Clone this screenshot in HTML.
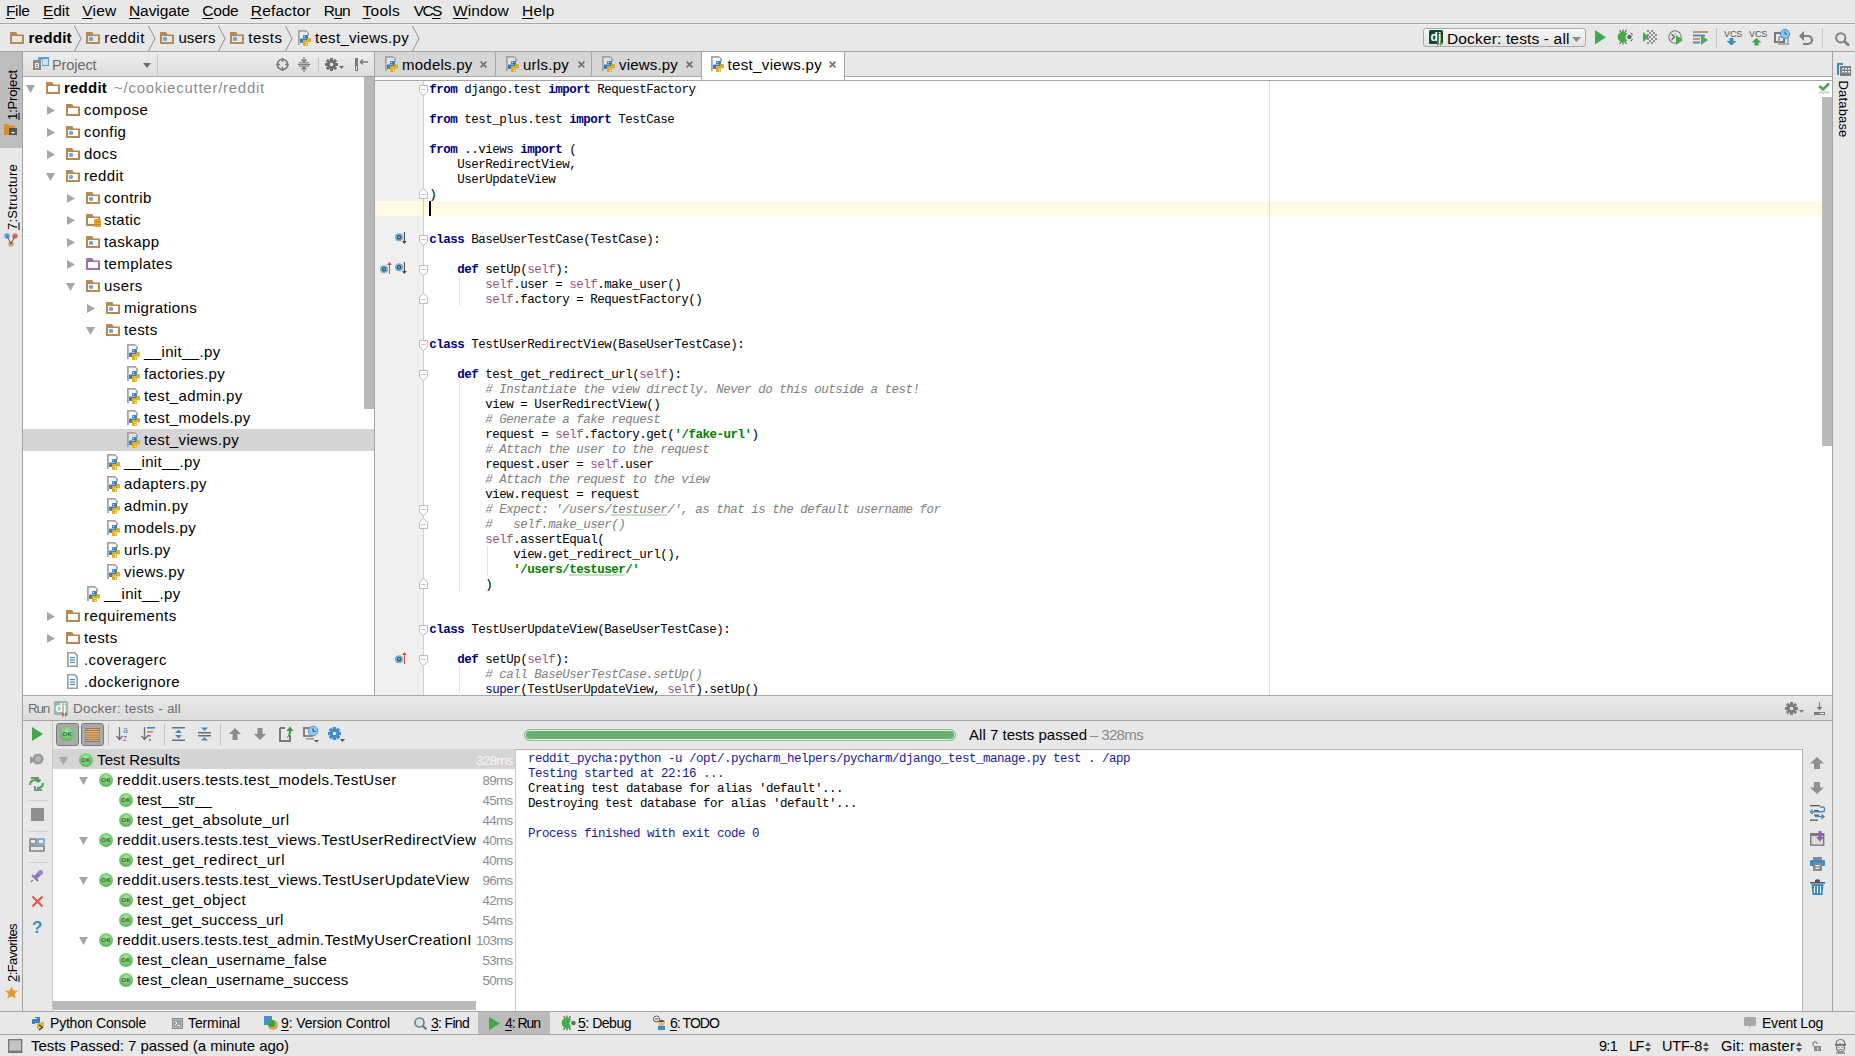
<!DOCTYPE html><html><head><meta charset="utf-8"><style>
*{margin:0;padding:0;box-sizing:border-box}
html,body{width:1855px;height:1056px;overflow:hidden}
body{position:relative;background:#E8E8E8;font-family:"Liberation Sans",sans-serif;color:#000;font-size:15px}
.a{position:absolute}
.t{position:absolute;white-space:pre;line-height:1}
.mono{font-family:"Liberation Mono",monospace}
.u{text-decoration:underline;text-decoration-thickness:1px;text-underline-offset:2px}
.hl{position:absolute;height:1px}
.vl{position:absolute;width:1px}
svg{position:absolute;overflow:visible}
</style></head><body>
<div class="a" style="left:0px;top:22px;width:1855px;height:1px;background:#EDEDED;"></div>
<div class="a" style="left:0px;top:23px;width:1855px;height:1px;background:#A4A4A4;"></div>
<div class="a" style="left:0px;top:24px;width:1855px;height:1px;background:#F2F2F2;"></div>
<div class="a" style="left:0px;top:51px;width:1855px;height:1px;background:#A6A6A6;"></div>
<div class="a" style="left:0px;top:52px;width:22px;height:96px;background:#BDBDBD;"></div>
<div class="a" style="left:22px;top:52px;width:1px;height:959px;background:#A2A2A2;"></div>
<div class="a" style="left:1832px;top:52px;width:1px;height:959px;background:#A2A2A2;"></div>
<div class="a" style="left:23px;top:52px;width:351px;height:24px;background:linear-gradient(#EDEDED,#DEDEDE);"></div>
<div class="a" style="left:23px;top:76px;width:351px;height:1px;background:#A6A6A6;"></div>
<div class="a" style="left:157px;top:54px;width:1px;height:20px;background:#C9C9C9;"></div>
<div class="a" style="left:23px;top:77px;width:351px;height:618px;background:#FFFFFF;"></div>
<div class="a" style="left:23px;top:429px;width:351px;height:22px;background:#D5D5D5;"></div>
<div class="a" style="left:364px;top:77px;width:10px;height:332px;background:#B9B9B9;"></div>
<div class="a" style="left:374px;top:52px;width:1px;height:643px;background:#A6A6A6;"></div>
<div class="a" style="left:375px;top:52px;width:1457px;height:24px;background:#E8E8E8;"></div>
<div class="a" style="left:375px;top:76px;width:1457px;height:1px;background:#A6A6A6;"></div>
<div class="a" style="left:375px;top:77px;width:1457px;height:618px;background:#FFFFFF;"></div>
<div class="a" style="left:375px;top:80px;width:1457px;height:1px;background:#A6A6A6;"></div>
<div class="a" style="left:375px;top:81px;width:48px;height:614px;background:#F0F0F0;"></div>
<div class="a" style="left:423px;top:81px;width:1px;height:614px;background:#D0D0D0;"></div>
<div class="a" style="left:375px;top:201px;width:1447px;height:15px;background:#FFFAE3;"></div>
<div class="a" style="left:1269px;top:81px;width:1px;height:614px;background:#E0E0E0;"></div>
<div class="a" style="left:1822px;top:97px;width:10px;height:349px;background:#B9B9B9;"></div>
<div class="a" style="left:23px;top:696px;width:1809px;height:24px;background:linear-gradient(#E9E9E9,#DCDCDC);"></div>
<div class="a" style="left:23px;top:695px;width:1809px;height:1px;background:#A8A8A8;"></div>
<div class="a" style="left:23px;top:720px;width:1809px;height:1px;background:#A6A6A6;"></div>
<div class="a" style="left:52px;top:721px;width:1px;height:290px;background:#C9C9C9;"></div>
<div class="a" style="left:53px;top:749px;width:463px;height:262px;background:#FFFFFF;"></div>
<div class="a" style="left:53px;top:749px;width:462px;height:20px;background:#D5D5D5;"></div>
<div class="a" style="left:515px;top:749px;width:1px;height:262px;background:#C9C9C9;"></div>
<div class="a" style="left:53px;top:1001px;width:423px;height:9px;background:#B9B9B9;"></div>
<div class="a" style="left:516px;top:749px;width:1286px;height:262px;background:#FFFFFF;"></div>
<div class="a" style="left:516px;top:749px;width:1287px;height:1px;background:#B4B4B4;"></div>
<div class="a" style="left:1802px;top:749px;width:1px;height:262px;background:#B4B4B4;"></div>
<div class="a" style="left:0px;top:1011px;width:1855px;height:1px;background:#A6A6A6;"></div>
<div class="a" style="left:478px;top:1012px;width:72px;height:22px;background:#BBBBBB;"></div>
<div class="a" style="left:0px;top:1034px;width:1855px;height:1px;background:#A6A6A6;"></div>
<div class="t" style="left:6px;top:3px;font-size:15.5px;color:#000;letter-spacing:-0.394px;"><span class="u">F</span>ile</div>
<div class="t" style="left:43px;top:3px;font-size:15.5px;color:#000;letter-spacing:-0.077px;"><span class="u">E</span>dit</div>
<div class="t" style="left:82.3px;top:3px;font-size:15.5px;color:#000;letter-spacing:0.171px;"><span class="u">V</span>iew</div>
<div class="t" style="left:129px;top:3px;font-size:15.5px;color:#000;letter-spacing:-0.097px;"><span class="u">N</span>avigate</div>
<div class="t" style="left:202.3px;top:3px;font-size:15.5px;color:#000;letter-spacing:-0.214px;"><span class="u">C</span>ode</div>
<div class="t" style="left:250.8px;top:3px;font-size:15.5px;color:#000;letter-spacing:0.178px;"><span class="u">R</span>efactor</div>
<div class="t" style="left:323.8px;top:3px;font-size:15.5px;color:#000;letter-spacing:-0.878px;">R<span class="u">u</span>n</div>
<div class="t" style="left:362.5px;top:3px;font-size:15.5px;color:#000;letter-spacing:0.263px;"><span class="u">T</span>ools</div>
<div class="t" style="left:413.8px;top:3px;font-size:15.5px;color:#000;letter-spacing:-1.691px;">VC<span class="u">S</span></div>
<div class="t" style="left:452.9px;top:3px;font-size:15.5px;color:#000;letter-spacing:0.145px;"><span class="u">W</span>indow</div>
<div class="t" style="left:522.1px;top:3px;font-size:15.5px;color:#000;letter-spacing:0.105px;"><span class="u">H</span>elp</div>
<svg style="left:26px;top:85px" width="9" height="8" viewBox="0 0 9 8"><path fill="#A6A6A6" d="M0 0H9L4.5 8Z"/></svg>
<svg style="left:46px;top:82px" width="17" height="14" viewBox="0 0 17 14"><path fill="#B68A53" fill-rule="evenodd" d="M0 0H6.2L7.6 2.6H14V12H0Z M2 4V10H12V4Z"/></svg>
<div class="t" style="left:64px;top:80px;font-size:15.0px;color:#000;letter-spacing:0.222px;"><b>reddit</b></div>
<div class="t" style="left:114px;top:80px;font-size:15.0px;color:#8C8C8C;letter-spacing:0.739px;">~/cookiecutter/reddit</div>
<svg style="left:47px;top:106px" width="8" height="9" viewBox="0 0 8 9"><path fill="#A6A6A6" d="M0 0L8 4.5L0 9Z"/></svg>
<svg style="left:66px;top:104px" width="17" height="14" viewBox="0 0 17 14"><path fill="#B68A53" fill-rule="evenodd" d="M0 0H6.2L7.6 2.6H14V12H0Z M2 4V10H12V4Z"/></svg>
<div class="t" style="left:84px;top:102px;font-size:15.0px;color:#000;letter-spacing:0.497px;">compose</div>
<svg style="left:47px;top:128px" width="8" height="9" viewBox="0 0 8 9"><path fill="#A6A6A6" d="M0 0L8 4.5L0 9Z"/></svg>
<svg style="left:66px;top:126px" width="17" height="14" viewBox="0 0 17 14"><path fill="#B68A53" fill-rule="evenodd" d="M0 0H6.2L7.6 2.6H14V12H0Z M2 4V10H12V4Z"/><circle cx="5" cy="6.9" r="2.2" fill="#72A6CF"/></svg>
<div class="t" style="left:84px;top:124px;font-size:15.0px;color:#000;letter-spacing:0.381px;">config</div>
<svg style="left:47px;top:150px" width="8" height="9" viewBox="0 0 8 9"><path fill="#A6A6A6" d="M0 0L8 4.5L0 9Z"/></svg>
<svg style="left:66px;top:148px" width="17" height="14" viewBox="0 0 17 14"><path fill="#B68A53" fill-rule="evenodd" d="M0 0H6.2L7.6 2.6H14V12H0Z M2 4V10H12V4Z"/><circle cx="5" cy="6.9" r="2.2" fill="#72A6CF"/></svg>
<div class="t" style="left:84px;top:146px;font-size:15.0px;color:#000;letter-spacing:0.452px;">docs</div>
<svg style="left:46px;top:173px" width="9" height="8" viewBox="0 0 9 8"><path fill="#A6A6A6" d="M0 0H9L4.5 8Z"/></svg>
<svg style="left:66px;top:170px" width="17" height="14" viewBox="0 0 17 14"><path fill="#B68A53" fill-rule="evenodd" d="M0 0H6.2L7.6 2.6H14V12H0Z M2 4V10H12V4Z"/><circle cx="5" cy="6.9" r="2.2" fill="#72A6CF"/></svg>
<div class="t" style="left:84px;top:168px;font-size:15.0px;color:#000;letter-spacing:0.357px;">reddit</div>
<svg style="left:67px;top:194px" width="8" height="9" viewBox="0 0 8 9"><path fill="#A6A6A6" d="M0 0L8 4.5L0 9Z"/></svg>
<svg style="left:86px;top:192px" width="17" height="14" viewBox="0 0 17 14"><path fill="#B68A53" fill-rule="evenodd" d="M0 0H6.2L7.6 2.6H14V12H0Z M2 4V10H12V4Z"/><circle cx="5" cy="6.9" r="2.2" fill="#72A6CF"/></svg>
<div class="t" style="left:104px;top:190px;font-size:15.0px;color:#000;letter-spacing:0.367px;">contrib</div>
<svg style="left:67px;top:216px" width="8" height="9" viewBox="0 0 8 9"><path fill="#A6A6A6" d="M0 0L8 4.5L0 9Z"/></svg>
<svg style="left:86px;top:214px" width="17" height="14" viewBox="0 0 17 14"><path fill="#B68A53" fill-rule="evenodd" d="M0 0H6.2L7.6 2.6H14V12H0Z M2 4V10H12V4Z"/><rect x="8" y="5" width="7" height="8" fill="#F2B21C"/><rect x="8" y="7.3" width="7" height="1" fill="#8A8A8A"/><rect x="8" y="10.2" width="7" height="1" fill="#8A8A8A"/><rect x="10" y="5" width="1" height="8" fill="#D08000" opacity=".6"/><rect x="12.5" y="5" width="1" height="8" fill="#D08000" opacity=".6"/></svg>
<div class="t" style="left:104px;top:212px;font-size:15.0px;color:#000;letter-spacing:0.333px;">static</div>
<svg style="left:67px;top:238px" width="8" height="9" viewBox="0 0 8 9"><path fill="#A6A6A6" d="M0 0L8 4.5L0 9Z"/></svg>
<svg style="left:86px;top:236px" width="17" height="14" viewBox="0 0 17 14"><path fill="#B68A53" fill-rule="evenodd" d="M0 0H6.2L7.6 2.6H14V12H0Z M2 4V10H12V4Z"/><circle cx="5" cy="6.9" r="2.2" fill="#72A6CF"/></svg>
<div class="t" style="left:104px;top:234px;font-size:15.0px;color:#000;letter-spacing:0.429px;">taskapp</div>
<svg style="left:67px;top:260px" width="8" height="9" viewBox="0 0 8 9"><path fill="#A6A6A6" d="M0 0L8 4.5L0 9Z"/></svg>
<svg style="left:86px;top:258px" width="17" height="14" viewBox="0 0 17 14"><path fill="#9C71B0" fill-rule="evenodd" d="M0 0H6.2L7.6 2.6H14V12H0Z M2 4V10H12V4Z"/></svg>
<div class="t" style="left:104px;top:256px;font-size:15.0px;color:#000;letter-spacing:0.413px;">templates</div>
<svg style="left:66px;top:283px" width="9" height="8" viewBox="0 0 9 8"><path fill="#A6A6A6" d="M0 0H9L4.5 8Z"/></svg>
<svg style="left:86px;top:280px" width="17" height="14" viewBox="0 0 17 14"><path fill="#B68A53" fill-rule="evenodd" d="M0 0H6.2L7.6 2.6H14V12H0Z M2 4V10H12V4Z"/><circle cx="5" cy="6.9" r="2.2" fill="#72A6CF"/></svg>
<div class="t" style="left:104px;top:278px;font-size:15.0px;color:#000;letter-spacing:0.419px;">users</div>
<svg style="left:87px;top:304px" width="8" height="9" viewBox="0 0 8 9"><path fill="#A6A6A6" d="M0 0L8 4.5L0 9Z"/></svg>
<svg style="left:106px;top:302px" width="17" height="14" viewBox="0 0 17 14"><path fill="#B68A53" fill-rule="evenodd" d="M0 0H6.2L7.6 2.6H14V12H0Z M2 4V10H12V4Z"/><circle cx="5" cy="6.9" r="2.2" fill="#72A6CF"/></svg>
<div class="t" style="left:124px;top:300px;font-size:15.0px;color:#000;letter-spacing:0.395px;">migrations</div>
<svg style="left:86px;top:327px" width="9" height="8" viewBox="0 0 9 8"><path fill="#A6A6A6" d="M0 0H9L4.5 8Z"/></svg>
<svg style="left:106px;top:324px" width="17" height="14" viewBox="0 0 17 14"><path fill="#B68A53" fill-rule="evenodd" d="M0 0H6.2L7.6 2.6H14V12H0Z M2 4V10H12V4Z"/><circle cx="5" cy="6.9" r="2.2" fill="#72A6CF"/></svg>
<div class="t" style="left:124px;top:322px;font-size:15.0px;color:#000;letter-spacing:0.362px;">tests</div>
<svg style="left:125px;top:344px" width="16" height="17" viewBox="0 0 16 17"><path fill="#A3A3A3" d="M2 0H10L13 3V5.5H11.2V3.8L9.3 1.8H3.8V15H2Z"/><path fill="#F4F4F4" opacity=".45" d="M3.8 1.8H9.3V3.8H11.2V5H7.5V8.5H4.8Q4 8.5 3.8 9Z"/><circle cx="10.4" cy="2.6" r=".7" fill="#fff"/><path fill="#3D7DB8" d="M7 5.8Q7 5 7.8 5H11.2Q12 5 12 5.8V10.2Q12 11 11.2 11H7.6V12.2Q7.6 13 6.8 13H4.8Q4 13 4 12.2V9.3Q4 8.5 4.8 8.5H10V8H7Z"/><circle cx="8.4" cy="6.3" r=".65" fill="#fff"/><g transform="rotate(180 9.5 10.5)"><path fill="#E0B020" d="M7 5.8Q7 5 7.8 5H11.2Q12 5 12 5.8V10.2Q12 11 11.2 11H7.6V12.2Q7.6 13 6.8 13H4.8Q4 13 4 12.2V9.3Q4 8.5 4.8 8.5H10V8H7Z"/><circle cx="8.4" cy="6.3" r=".65" fill="#fff"/></g></svg>
<div class="t" style="left:144px;top:344px;font-size:15.0px;color:#000;letter-spacing:0.377px;">__init__.py</div>
<svg style="left:125px;top:366px" width="16" height="17" viewBox="0 0 16 17"><path fill="#A3A3A3" d="M2 0H10L13 3V5.5H11.2V3.8L9.3 1.8H3.8V15H2Z"/><path fill="#F4F4F4" opacity=".45" d="M3.8 1.8H9.3V3.8H11.2V5H7.5V8.5H4.8Q4 8.5 3.8 9Z"/><circle cx="10.4" cy="2.6" r=".7" fill="#fff"/><path fill="#3D7DB8" d="M7 5.8Q7 5 7.8 5H11.2Q12 5 12 5.8V10.2Q12 11 11.2 11H7.6V12.2Q7.6 13 6.8 13H4.8Q4 13 4 12.2V9.3Q4 8.5 4.8 8.5H10V8H7Z"/><circle cx="8.4" cy="6.3" r=".65" fill="#fff"/><g transform="rotate(180 9.5 10.5)"><path fill="#E0B020" d="M7 5.8Q7 5 7.8 5H11.2Q12 5 12 5.8V10.2Q12 11 11.2 11H7.6V12.2Q7.6 13 6.8 13H4.8Q4 13 4 12.2V9.3Q4 8.5 4.8 8.5H10V8H7Z"/><circle cx="8.4" cy="6.3" r=".65" fill="#fff"/></g></svg>
<div class="t" style="left:144px;top:366px;font-size:15.0px;color:#000;letter-spacing:0.365px;">factories.py</div>
<svg style="left:125px;top:388px" width="16" height="17" viewBox="0 0 16 17"><path fill="#A3A3A3" d="M2 0H10L13 3V5.5H11.2V3.8L9.3 1.8H3.8V15H2Z"/><path fill="#F4F4F4" opacity=".45" d="M3.8 1.8H9.3V3.8H11.2V5H7.5V8.5H4.8Q4 8.5 3.8 9Z"/><circle cx="10.4" cy="2.6" r=".7" fill="#fff"/><path fill="#3D7DB8" d="M7 5.8Q7 5 7.8 5H11.2Q12 5 12 5.8V10.2Q12 11 11.2 11H7.6V12.2Q7.6 13 6.8 13H4.8Q4 13 4 12.2V9.3Q4 8.5 4.8 8.5H10V8H7Z"/><circle cx="8.4" cy="6.3" r=".65" fill="#fff"/><g transform="rotate(180 9.5 10.5)"><path fill="#E0B020" d="M7 5.8Q7 5 7.8 5H11.2Q12 5 12 5.8V10.2Q12 11 11.2 11H7.6V12.2Q7.6 13 6.8 13H4.8Q4 13 4 12.2V9.3Q4 8.5 4.8 8.5H10V8H7Z"/><circle cx="8.4" cy="6.3" r=".65" fill="#fff"/></g></svg>
<div class="t" style="left:144px;top:388px;font-size:15.0px;color:#000;letter-spacing:0.410px;">test_admin.py</div>
<svg style="left:125px;top:410px" width="16" height="17" viewBox="0 0 16 17"><path fill="#A3A3A3" d="M2 0H10L13 3V5.5H11.2V3.8L9.3 1.8H3.8V15H2Z"/><path fill="#F4F4F4" opacity=".45" d="M3.8 1.8H9.3V3.8H11.2V5H7.5V8.5H4.8Q4 8.5 3.8 9Z"/><circle cx="10.4" cy="2.6" r=".7" fill="#fff"/><path fill="#3D7DB8" d="M7 5.8Q7 5 7.8 5H11.2Q12 5 12 5.8V10.2Q12 11 11.2 11H7.6V12.2Q7.6 13 6.8 13H4.8Q4 13 4 12.2V9.3Q4 8.5 4.8 8.5H10V8H7Z"/><circle cx="8.4" cy="6.3" r=".65" fill="#fff"/><g transform="rotate(180 9.5 10.5)"><path fill="#E0B020" d="M7 5.8Q7 5 7.8 5H11.2Q12 5 12 5.8V10.2Q12 11 11.2 11H7.6V12.2Q7.6 13 6.8 13H4.8Q4 13 4 12.2V9.3Q4 8.5 4.8 8.5H10V8H7Z"/><circle cx="8.4" cy="6.3" r=".65" fill="#fff"/></g></svg>
<div class="t" style="left:144px;top:410px;font-size:15.0px;color:#000;letter-spacing:0.412px;">test_models.py</div>
<svg style="left:125px;top:432px" width="16" height="17" viewBox="0 0 16 17"><path fill="#A3A3A3" d="M2 0H10L13 3V5.5H11.2V3.8L9.3 1.8H3.8V15H2Z"/><path fill="#F4F4F4" opacity=".45" d="M3.8 1.8H9.3V3.8H11.2V5H7.5V8.5H4.8Q4 8.5 3.8 9Z"/><circle cx="10.4" cy="2.6" r=".7" fill="#fff"/><path fill="#3D7DB8" d="M7 5.8Q7 5 7.8 5H11.2Q12 5 12 5.8V10.2Q12 11 11.2 11H7.6V12.2Q7.6 13 6.8 13H4.8Q4 13 4 12.2V9.3Q4 8.5 4.8 8.5H10V8H7Z"/><circle cx="8.4" cy="6.3" r=".65" fill="#fff"/><g transform="rotate(180 9.5 10.5)"><path fill="#E0B020" d="M7 5.8Q7 5 7.8 5H11.2Q12 5 12 5.8V10.2Q12 11 11.2 11H7.6V12.2Q7.6 13 6.8 13H4.8Q4 13 4 12.2V9.3Q4 8.5 4.8 8.5H10V8H7Z"/><circle cx="8.4" cy="6.3" r=".65" fill="#fff"/></g></svg>
<div class="t" style="left:144px;top:432px;font-size:15.0px;color:#000;letter-spacing:0.396px;">test_views.py</div>
<svg style="left:105px;top:454px" width="16" height="17" viewBox="0 0 16 17"><path fill="#A3A3A3" d="M2 0H10L13 3V5.5H11.2V3.8L9.3 1.8H3.8V15H2Z"/><path fill="#F4F4F4" opacity=".45" d="M3.8 1.8H9.3V3.8H11.2V5H7.5V8.5H4.8Q4 8.5 3.8 9Z"/><circle cx="10.4" cy="2.6" r=".7" fill="#fff"/><path fill="#3D7DB8" d="M7 5.8Q7 5 7.8 5H11.2Q12 5 12 5.8V10.2Q12 11 11.2 11H7.6V12.2Q7.6 13 6.8 13H4.8Q4 13 4 12.2V9.3Q4 8.5 4.8 8.5H10V8H7Z"/><circle cx="8.4" cy="6.3" r=".65" fill="#fff"/><g transform="rotate(180 9.5 10.5)"><path fill="#E0B020" d="M7 5.8Q7 5 7.8 5H11.2Q12 5 12 5.8V10.2Q12 11 11.2 11H7.6V12.2Q7.6 13 6.8 13H4.8Q4 13 4 12.2V9.3Q4 8.5 4.8 8.5H10V8H7Z"/><circle cx="8.4" cy="6.3" r=".65" fill="#fff"/></g></svg>
<div class="t" style="left:124px;top:454px;font-size:15.0px;color:#000;letter-spacing:0.377px;">__init__.py</div>
<svg style="left:105px;top:476px" width="16" height="17" viewBox="0 0 16 17"><path fill="#A3A3A3" d="M2 0H10L13 3V5.5H11.2V3.8L9.3 1.8H3.8V15H2Z"/><path fill="#F4F4F4" opacity=".45" d="M3.8 1.8H9.3V3.8H11.2V5H7.5V8.5H4.8Q4 8.5 3.8 9Z"/><circle cx="10.4" cy="2.6" r=".7" fill="#fff"/><path fill="#3D7DB8" d="M7 5.8Q7 5 7.8 5H11.2Q12 5 12 5.8V10.2Q12 11 11.2 11H7.6V12.2Q7.6 13 6.8 13H4.8Q4 13 4 12.2V9.3Q4 8.5 4.8 8.5H10V8H7Z"/><circle cx="8.4" cy="6.3" r=".65" fill="#fff"/><g transform="rotate(180 9.5 10.5)"><path fill="#E0B020" d="M7 5.8Q7 5 7.8 5H11.2Q12 5 12 5.8V10.2Q12 11 11.2 11H7.6V12.2Q7.6 13 6.8 13H4.8Q4 13 4 12.2V9.3Q4 8.5 4.8 8.5H10V8H7Z"/><circle cx="8.4" cy="6.3" r=".65" fill="#fff"/></g></svg>
<div class="t" style="left:124px;top:476px;font-size:15.0px;color:#000;letter-spacing:0.407px;">adapters.py</div>
<svg style="left:105px;top:498px" width="16" height="17" viewBox="0 0 16 17"><path fill="#A3A3A3" d="M2 0H10L13 3V5.5H11.2V3.8L9.3 1.8H3.8V15H2Z"/><path fill="#F4F4F4" opacity=".45" d="M3.8 1.8H9.3V3.8H11.2V5H7.5V8.5H4.8Q4 8.5 3.8 9Z"/><circle cx="10.4" cy="2.6" r=".7" fill="#fff"/><path fill="#3D7DB8" d="M7 5.8Q7 5 7.8 5H11.2Q12 5 12 5.8V10.2Q12 11 11.2 11H7.6V12.2Q7.6 13 6.8 13H4.8Q4 13 4 12.2V9.3Q4 8.5 4.8 8.5H10V8H7Z"/><circle cx="8.4" cy="6.3" r=".65" fill="#fff"/><g transform="rotate(180 9.5 10.5)"><path fill="#E0B020" d="M7 5.8Q7 5 7.8 5H11.2Q12 5 12 5.8V10.2Q12 11 11.2 11H7.6V12.2Q7.6 13 6.8 13H4.8Q4 13 4 12.2V9.3Q4 8.5 4.8 8.5H10V8H7Z"/><circle cx="8.4" cy="6.3" r=".65" fill="#fff"/></g></svg>
<div class="t" style="left:124px;top:498px;font-size:15.0px;color:#000;letter-spacing:0.435px;">admin.py</div>
<svg style="left:105px;top:520px" width="16" height="17" viewBox="0 0 16 17"><path fill="#A3A3A3" d="M2 0H10L13 3V5.5H11.2V3.8L9.3 1.8H3.8V15H2Z"/><path fill="#F4F4F4" opacity=".45" d="M3.8 1.8H9.3V3.8H11.2V5H7.5V8.5H4.8Q4 8.5 3.8 9Z"/><circle cx="10.4" cy="2.6" r=".7" fill="#fff"/><path fill="#3D7DB8" d="M7 5.8Q7 5 7.8 5H11.2Q12 5 12 5.8V10.2Q12 11 11.2 11H7.6V12.2Q7.6 13 6.8 13H4.8Q4 13 4 12.2V9.3Q4 8.5 4.8 8.5H10V8H7Z"/><circle cx="8.4" cy="6.3" r=".65" fill="#fff"/><g transform="rotate(180 9.5 10.5)"><path fill="#E0B020" d="M7 5.8Q7 5 7.8 5H11.2Q12 5 12 5.8V10.2Q12 11 11.2 11H7.6V12.2Q7.6 13 6.8 13H4.8Q4 13 4 12.2V9.3Q4 8.5 4.8 8.5H10V8H7Z"/><circle cx="8.4" cy="6.3" r=".65" fill="#fff"/></g></svg>
<div class="t" style="left:124px;top:520px;font-size:15.0px;color:#000;letter-spacing:0.434px;">models.py</div>
<svg style="left:105px;top:542px" width="16" height="17" viewBox="0 0 16 17"><path fill="#A3A3A3" d="M2 0H10L13 3V5.5H11.2V3.8L9.3 1.8H3.8V15H2Z"/><path fill="#F4F4F4" opacity=".45" d="M3.8 1.8H9.3V3.8H11.2V5H7.5V8.5H4.8Q4 8.5 3.8 9Z"/><circle cx="10.4" cy="2.6" r=".7" fill="#fff"/><path fill="#3D7DB8" d="M7 5.8Q7 5 7.8 5H11.2Q12 5 12 5.8V10.2Q12 11 11.2 11H7.6V12.2Q7.6 13 6.8 13H4.8Q4 13 4 12.2V9.3Q4 8.5 4.8 8.5H10V8H7Z"/><circle cx="8.4" cy="6.3" r=".65" fill="#fff"/><g transform="rotate(180 9.5 10.5)"><path fill="#E0B020" d="M7 5.8Q7 5 7.8 5H11.2Q12 5 12 5.8V10.2Q12 11 11.2 11H7.6V12.2Q7.6 13 6.8 13H4.8Q4 13 4 12.2V9.3Q4 8.5 4.8 8.5H10V8H7Z"/><circle cx="8.4" cy="6.3" r=".65" fill="#fff"/></g></svg>
<div class="t" style="left:124px;top:542px;font-size:15.0px;color:#000;letter-spacing:0.360px;">urls.py</div>
<svg style="left:105px;top:564px" width="16" height="17" viewBox="0 0 16 17"><path fill="#A3A3A3" d="M2 0H10L13 3V5.5H11.2V3.8L9.3 1.8H3.8V15H2Z"/><path fill="#F4F4F4" opacity=".45" d="M3.8 1.8H9.3V3.8H11.2V5H7.5V8.5H4.8Q4 8.5 3.8 9Z"/><circle cx="10.4" cy="2.6" r=".7" fill="#fff"/><path fill="#3D7DB8" d="M7 5.8Q7 5 7.8 5H11.2Q12 5 12 5.8V10.2Q12 11 11.2 11H7.6V12.2Q7.6 13 6.8 13H4.8Q4 13 4 12.2V9.3Q4 8.5 4.8 8.5H10V8H7Z"/><circle cx="8.4" cy="6.3" r=".65" fill="#fff"/><g transform="rotate(180 9.5 10.5)"><path fill="#E0B020" d="M7 5.8Q7 5 7.8 5H11.2Q12 5 12 5.8V10.2Q12 11 11.2 11H7.6V12.2Q7.6 13 6.8 13H4.8Q4 13 4 12.2V9.3Q4 8.5 4.8 8.5H10V8H7Z"/><circle cx="8.4" cy="6.3" r=".65" fill="#fff"/></g></svg>
<div class="t" style="left:124px;top:564px;font-size:15.0px;color:#000;letter-spacing:0.411px;">views.py</div>
<svg style="left:85px;top:586px" width="16" height="17" viewBox="0 0 16 17"><path fill="#A3A3A3" d="M2 0H10L13 3V5.5H11.2V3.8L9.3 1.8H3.8V15H2Z"/><path fill="#F4F4F4" opacity=".45" d="M3.8 1.8H9.3V3.8H11.2V5H7.5V8.5H4.8Q4 8.5 3.8 9Z"/><circle cx="10.4" cy="2.6" r=".7" fill="#fff"/><path fill="#3D7DB8" d="M7 5.8Q7 5 7.8 5H11.2Q12 5 12 5.8V10.2Q12 11 11.2 11H7.6V12.2Q7.6 13 6.8 13H4.8Q4 13 4 12.2V9.3Q4 8.5 4.8 8.5H10V8H7Z"/><circle cx="8.4" cy="6.3" r=".65" fill="#fff"/><g transform="rotate(180 9.5 10.5)"><path fill="#E0B020" d="M7 5.8Q7 5 7.8 5H11.2Q12 5 12 5.8V10.2Q12 11 11.2 11H7.6V12.2Q7.6 13 6.8 13H4.8Q4 13 4 12.2V9.3Q4 8.5 4.8 8.5H10V8H7Z"/><circle cx="8.4" cy="6.3" r=".65" fill="#fff"/></g></svg>
<div class="t" style="left:104px;top:586px;font-size:15.0px;color:#000;letter-spacing:0.377px;">__init__.py</div>
<svg style="left:47px;top:612px" width="8" height="9" viewBox="0 0 8 9"><path fill="#A6A6A6" d="M0 0L8 4.5L0 9Z"/></svg>
<svg style="left:66px;top:610px" width="17" height="14" viewBox="0 0 17 14"><path fill="#B68A53" fill-rule="evenodd" d="M0 0H6.2L7.6 2.6H14V12H0Z M2 4V10H12V4Z"/></svg>
<div class="t" style="left:84px;top:608px;font-size:15.0px;color:#000;letter-spacing:0.417px;">requirements</div>
<svg style="left:47px;top:634px" width="8" height="9" viewBox="0 0 8 9"><path fill="#A6A6A6" d="M0 0L8 4.5L0 9Z"/></svg>
<svg style="left:66px;top:632px" width="17" height="14" viewBox="0 0 17 14"><path fill="#B68A53" fill-rule="evenodd" d="M0 0H6.2L7.6 2.6H14V12H0Z M2 4V10H12V4Z"/></svg>
<div class="t" style="left:84px;top:630px;font-size:15.0px;color:#000;letter-spacing:0.362px;">tests</div>
<svg style="left:67px;top:652px" width="11" height="15" viewBox="0 0 11 15"><path fill="#9D9D9D" fill-rule="evenodd" d="M0 0H8L11 3V15H0Z M1.6 1.6V13.4H9.4V3.7L7.3 1.6Z"/><rect x="1.5" y="1.5" width="8" height="12" fill="#fff" opacity="0"/><rect x="3" y="5" width="5" height="1.2" fill="#3D8FC6"/><rect x="3" y="7.4" width="5" height="1.2" fill="#3D8FC6"/><rect x="3" y="9.8" width="5" height="1.2" fill="#3D8FC6"/></svg>
<div class="t" style="left:84px;top:652px;font-size:15.0px;color:#000;letter-spacing:0.407px;">.coveragerc</div>
<svg style="left:67px;top:674px" width="11" height="15" viewBox="0 0 11 15"><path fill="#9D9D9D" fill-rule="evenodd" d="M0 0H8L11 3V15H0Z M1.6 1.6V13.4H9.4V3.7L7.3 1.6Z"/><rect x="1.5" y="1.5" width="8" height="12" fill="#fff" opacity="0"/><rect x="3" y="5" width="5" height="1.2" fill="#3D8FC6"/><rect x="3" y="7.4" width="5" height="1.2" fill="#3D8FC6"/><rect x="3" y="9.8" width="5" height="1.2" fill="#3D8FC6"/></svg>
<div class="t" style="left:84px;top:674px;font-size:15.0px;color:#000;letter-spacing:0.399px;">.dockerignore</div>
<svg style="left:10px;top:32px" width="17" height="14" viewBox="0 0 17 14"><path fill="#B68A53" fill-rule="evenodd" d="M0 0H6.2L7.6 2.6H14V12H0Z M2 4V10H12V4Z"/></svg>
<div class="t" style="left:28.5px;top:30px;font-size:15.2px;color:#000;letter-spacing:0.179px;"><b>reddit</b></div>
<svg style="left:74px;top:26px" width="8" height="25" viewBox="0 0 8 25"><path d="M0.5 0L7 12.5L0.5 25" fill="none" stroke="#8E8E8E" stroke-width="1"/></svg>
<svg style="left:86px;top:32px" width="17" height="14" viewBox="0 0 17 14"><path fill="#B68A53" fill-rule="evenodd" d="M0 0H6.2L7.6 2.6H14V12H0Z M2 4V10H12V4Z"/><circle cx="5" cy="6.9" r="2.2" fill="#72A6CF"/></svg>
<div class="t" style="left:104.2px;top:30px;font-size:15px;color:#000;letter-spacing:0.530px;">reddit</div>
<svg style="left:148px;top:26px" width="8" height="25" viewBox="0 0 8 25"><path d="M0.5 0L7 12.5L0.5 25" fill="none" stroke="#8E8E8E" stroke-width="1"/></svg>
<svg style="left:160px;top:32px" width="17" height="14" viewBox="0 0 17 14"><path fill="#B68A53" fill-rule="evenodd" d="M0 0H6.2L7.6 2.6H14V12H0Z M2 4V10H12V4Z"/><circle cx="5" cy="6.9" r="2.2" fill="#72A6CF"/></svg>
<div class="t" style="left:178.4px;top:30px;font-size:15px;color:#000;letter-spacing:0.084px;">users</div>
<svg style="left:218px;top:26px" width="8" height="25" viewBox="0 0 8 25"><path d="M0.5 0L7 12.5L0.5 25" fill="none" stroke="#8E8E8E" stroke-width="1"/></svg>
<svg style="left:230px;top:32px" width="17" height="14" viewBox="0 0 17 14"><path fill="#B68A53" fill-rule="evenodd" d="M0 0H6.2L7.6 2.6H14V12H0Z M2 4V10H12V4Z"/><circle cx="5" cy="6.9" r="2.2" fill="#72A6CF"/></svg>
<div class="t" style="left:248.3px;top:30px;font-size:15px;color:#000;letter-spacing:0.485px;">tests</div>
<svg style="left:285px;top:26px" width="8" height="25" viewBox="0 0 8 25"><path d="M0.5 0L7 12.5L0.5 25" fill="none" stroke="#8E8E8E" stroke-width="1"/></svg>
<svg style="left:296px;top:30px" width="16" height="17" viewBox="0 0 16 17"><path fill="#A3A3A3" d="M2 0H10L13 3V5.5H11.2V3.8L9.3 1.8H3.8V15H2Z"/><path fill="#F4F4F4" opacity=".45" d="M3.8 1.8H9.3V3.8H11.2V5H7.5V8.5H4.8Q4 8.5 3.8 9Z"/><circle cx="10.4" cy="2.6" r=".7" fill="#fff"/><path fill="#3D7DB8" d="M7 5.8Q7 5 7.8 5H11.2Q12 5 12 5.8V10.2Q12 11 11.2 11H7.6V12.2Q7.6 13 6.8 13H4.8Q4 13 4 12.2V9.3Q4 8.5 4.8 8.5H10V8H7Z"/><circle cx="8.4" cy="6.3" r=".65" fill="#fff"/><g transform="rotate(180 9.5 10.5)"><path fill="#E0B020" d="M7 5.8Q7 5 7.8 5H11.2Q12 5 12 5.8V10.2Q12 11 11.2 11H7.6V12.2Q7.6 13 6.8 13H4.8Q4 13 4 12.2V9.3Q4 8.5 4.8 8.5H10V8H7Z"/><circle cx="8.4" cy="6.3" r=".65" fill="#fff"/></g></svg>
<div class="t" style="left:315px;top:30px;font-size:15px;color:#000;letter-spacing:0.305px;">test_views.py</div>
<svg style="left:412px;top:26px" width="8" height="25" viewBox="0 0 8 25"><path d="M0.5 0L7 12.5L0.5 25" fill="none" stroke="#8E8E8E" stroke-width="1"/></svg>
<svg style="left:33px;top:57px" width="16" height="13" viewBox="0 0 16 13"><rect x="0" y="3" width="8" height="10" fill="#8A8A8A"/><rect x="2" y="6" width="4" height="5" fill="#E6E6E6"/><rect x="3" y="7" width="2" height="1" fill="#8A8A8A"/><rect x="3" y="9" width="2" height="1" fill="#8A8A8A"/><path d="M5 0H16V9H9V3H5Z" fill="#5D9FD8"/><rect x="9.5" y="2" width="5.5" height="6" fill="#C9E2F5"/></svg>
<div class="t" style="left:52px;top:58px;font-size:14.5px;color:#6A6A6A;letter-spacing:-0.090px;">Project</div>
<svg style="left:143px;top:63px" width="8" height="5" viewBox="0 0 8 5"><path d="M0 0H8L4 5Z" fill="#6E6E6E"/></svg>
<svg style="left:276px;top:58px" width="13" height="13" viewBox="0 0 13 13"><circle cx="6.5" cy="6.5" r="5.2" fill="none" stroke="#7A7A7A" stroke-width="1.6"/><path d="M6.5 0V4M6.5 9V13M0 6.5H4M9 6.5H13" stroke="#7A7A7A" stroke-width="1.6"/></svg>
<svg style="left:298px;top:57px" width="12" height="15" viewBox="0 0 12 15"><path d="M0 7.5H12" stroke="#7A7A7A" stroke-width="1.3"/><path d="M6 0V5M3.5 2.5L6 5L8.5 2.5M6 15V10M3.5 12.5L6 10L8.5 12.5" stroke="#7A7A7A" stroke-width="1.3" fill="none"/><path d="M1 5.8H11M1 9.2H11" stroke="#7A7A7A" stroke-width="1"/></svg>
<div class="a" style="left:318px;top:57px;width:1px;height:15px;background:#C4C4C4;"></div>
<svg style="left:325px;top:58px" width="20" height="13" viewBox="0 0 20 13"><g transform="translate(6.5 6.5)"><circle r="4.3" fill="#6E6E6E"/><rect x="-1.5" y="-6.5" width="3" height="3.5" fill="#6E6E6E" transform="rotate(0)"/><rect x="-1.5" y="-6.5" width="3" height="3.5" fill="#6E6E6E" transform="rotate(45)"/><rect x="-1.5" y="-6.5" width="3" height="3.5" fill="#6E6E6E" transform="rotate(90)"/><rect x="-1.5" y="-6.5" width="3" height="3.5" fill="#6E6E6E" transform="rotate(135)"/><rect x="-1.5" y="-6.5" width="3" height="3.5" fill="#6E6E6E" transform="rotate(180)"/><rect x="-1.5" y="-6.5" width="3" height="3.5" fill="#6E6E6E" transform="rotate(225)"/><rect x="-1.5" y="-6.5" width="3" height="3.5" fill="#6E6E6E" transform="rotate(270)"/><rect x="-1.5" y="-6.5" width="3" height="3.5" fill="#6E6E6E" transform="rotate(315)"/><circle r="1.8" fill="#E4E4E4"/></g><path d="M14 8H19L16.5 11Z" fill="#6E6E6E"/></svg>
<svg style="left:355px;top:58px" width="13" height="13" viewBox="0 0 13 13"><rect x="0" y="0" width="3" height="13" fill="#7A7A7A"/><rect x="1" y="8" width="1" height="4" fill="#E4E4E4"/><path d="M5 4H13M5 4L8 1.5M5 4L8 6.5" stroke="#7A7A7A" stroke-width="1.4" fill="none"/></svg>
<div class="a" style="left:375px;top:52px;width:120px;height:24px;background:#D6D6D6;"></div>
<svg style="left:383px;top:56px" width="16" height="17" viewBox="0 0 16 17"><path fill="#A3A3A3" d="M2 0H10L13 3V5.5H11.2V3.8L9.3 1.8H3.8V15H2Z"/><path fill="#F4F4F4" opacity=".45" d="M3.8 1.8H9.3V3.8H11.2V5H7.5V8.5H4.8Q4 8.5 3.8 9Z"/><circle cx="10.4" cy="2.6" r=".7" fill="#fff"/><path fill="#3D7DB8" d="M7 5.8Q7 5 7.8 5H11.2Q12 5 12 5.8V10.2Q12 11 11.2 11H7.6V12.2Q7.6 13 6.8 13H4.8Q4 13 4 12.2V9.3Q4 8.5 4.8 8.5H10V8H7Z"/><circle cx="8.4" cy="6.3" r=".65" fill="#fff"/><g transform="rotate(180 9.5 10.5)"><path fill="#E0B020" d="M7 5.8Q7 5 7.8 5H11.2Q12 5 12 5.8V10.2Q12 11 11.2 11H7.6V12.2Q7.6 13 6.8 13H4.8Q4 13 4 12.2V9.3Q4 8.5 4.8 8.5H10V8H7Z"/><circle cx="8.4" cy="6.3" r=".65" fill="#fff"/></g></svg>
<div class="t" style="left:402px;top:57px;font-size:15px;color:#000;letter-spacing:0.248px;">models.py</div>
<svg style="left:480px;top:61px" width="7" height="7" viewBox="0 0 7 7"><path d="M0.6 0.6L6.4 6.4M6.4 0.6L0.6 6.4" stroke="#707070" stroke-width="1.6"/></svg>
<div class="a" style="left:496px;top:52px;width:95px;height:24px;background:#D6D6D6;"></div>
<svg style="left:504px;top:56px" width="16" height="17" viewBox="0 0 16 17"><path fill="#A3A3A3" d="M2 0H10L13 3V5.5H11.2V3.8L9.3 1.8H3.8V15H2Z"/><path fill="#F4F4F4" opacity=".45" d="M3.8 1.8H9.3V3.8H11.2V5H7.5V8.5H4.8Q4 8.5 3.8 9Z"/><circle cx="10.4" cy="2.6" r=".7" fill="#fff"/><path fill="#3D7DB8" d="M7 5.8Q7 5 7.8 5H11.2Q12 5 12 5.8V10.2Q12 11 11.2 11H7.6V12.2Q7.6 13 6.8 13H4.8Q4 13 4 12.2V9.3Q4 8.5 4.8 8.5H10V8H7Z"/><circle cx="8.4" cy="6.3" r=".65" fill="#fff"/><g transform="rotate(180 9.5 10.5)"><path fill="#E0B020" d="M7 5.8Q7 5 7.8 5H11.2Q12 5 12 5.8V10.2Q12 11 11.2 11H7.6V12.2Q7.6 13 6.8 13H4.8Q4 13 4 12.2V9.3Q4 8.5 4.8 8.5H10V8H7Z"/><circle cx="8.4" cy="6.3" r=".65" fill="#fff"/></g></svg>
<div class="t" style="left:523px;top:57px;font-size:15px;color:#000;letter-spacing:0.260px;">urls.py</div>
<svg style="left:578px;top:61px" width="7" height="7" viewBox="0 0 7 7"><path d="M0.6 0.6L6.4 6.4M6.4 0.6L0.6 6.4" stroke="#707070" stroke-width="1.6"/></svg>
<div class="a" style="left:592px;top:52px;width:109px;height:24px;background:#D6D6D6;"></div>
<svg style="left:600px;top:56px" width="16" height="17" viewBox="0 0 16 17"><path fill="#A3A3A3" d="M2 0H10L13 3V5.5H11.2V3.8L9.3 1.8H3.8V15H2Z"/><path fill="#F4F4F4" opacity=".45" d="M3.8 1.8H9.3V3.8H11.2V5H7.5V8.5H4.8Q4 8.5 3.8 9Z"/><circle cx="10.4" cy="2.6" r=".7" fill="#fff"/><path fill="#3D7DB8" d="M7 5.8Q7 5 7.8 5H11.2Q12 5 12 5.8V10.2Q12 11 11.2 11H7.6V12.2Q7.6 13 6.8 13H4.8Q4 13 4 12.2V9.3Q4 8.5 4.8 8.5H10V8H7Z"/><circle cx="8.4" cy="6.3" r=".65" fill="#fff"/><g transform="rotate(180 9.5 10.5)"><path fill="#E0B020" d="M7 5.8Q7 5 7.8 5H11.2Q12 5 12 5.8V10.2Q12 11 11.2 11H7.6V12.2Q7.6 13 6.8 13H4.8Q4 13 4 12.2V9.3Q4 8.5 4.8 8.5H10V8H7Z"/><circle cx="8.4" cy="6.3" r=".65" fill="#fff"/></g></svg>
<div class="t" style="left:619px;top:57px;font-size:15px;color:#000;letter-spacing:0.185px;">views.py</div>
<svg style="left:686px;top:61px" width="7" height="7" viewBox="0 0 7 7"><path d="M0.6 0.6L6.4 6.4M6.4 0.6L0.6 6.4" stroke="#707070" stroke-width="1.6"/></svg>
<div class="a" style="left:702px;top:52px;width:142px;height:28px;background:#FFFFFF;"></div>
<svg style="left:709px;top:56px" width="16" height="17" viewBox="0 0 16 17"><path fill="#A3A3A3" d="M2 0H10L13 3V5.5H11.2V3.8L9.3 1.8H3.8V15H2Z"/><path fill="#F4F4F4" opacity=".45" d="M3.8 1.8H9.3V3.8H11.2V5H7.5V8.5H4.8Q4 8.5 3.8 9Z"/><circle cx="10.4" cy="2.6" r=".7" fill="#fff"/><path fill="#3D7DB8" d="M7 5.8Q7 5 7.8 5H11.2Q12 5 12 5.8V10.2Q12 11 11.2 11H7.6V12.2Q7.6 13 6.8 13H4.8Q4 13 4 12.2V9.3Q4 8.5 4.8 8.5H10V8H7Z"/><circle cx="8.4" cy="6.3" r=".65" fill="#fff"/><g transform="rotate(180 9.5 10.5)"><path fill="#E0B020" d="M7 5.8Q7 5 7.8 5H11.2Q12 5 12 5.8V10.2Q12 11 11.2 11H7.6V12.2Q7.6 13 6.8 13H4.8Q4 13 4 12.2V9.3Q4 8.5 4.8 8.5H10V8H7Z"/><circle cx="8.4" cy="6.3" r=".65" fill="#fff"/></g></svg>
<div class="t" style="left:727.6px;top:57px;font-size:15px;color:#000;letter-spacing:0.336px;">test_views.py</div>
<svg style="left:829px;top:61px" width="7" height="7" viewBox="0 0 7 7"><path d="M0.6 0.6L6.4 6.4M6.4 0.6L0.6 6.4" stroke="#707070" stroke-width="1.6"/></svg>
<div class="a" style="left:375px;top:51px;width:470px;height:1px;background:#A6A6A6;"></div>
<div class="a" style="left:495px;top:52px;width:1px;height:24px;background:#A6A6A6;"></div>
<div class="a" style="left:591px;top:52px;width:1px;height:24px;background:#A6A6A6;"></div>
<div class="a" style="left:701px;top:52px;width:1px;height:29px;background:#A6A6A6;"></div>
<div class="a" style="left:844px;top:52px;width:1px;height:29px;background:#A6A6A6;"></div>
<div class="a" style="left:701px;top:52px;width:1px;height:25px;background:#A6A6A6;"></div>
<div class="a" style="left:844px;top:52px;width:1px;height:25px;background:#A6A6A6;"></div>
<div class="a" style="left:459px;top:263px;width:1px;height:0px;background:#E6E6E6;"></div>
<div class="a" style="left:459px;top:276px;width:1px;height:30px;background:#E4E4E4;"></div>
<div class="a" style="left:459px;top:381px;width:1px;height:210px;background:#E4E4E4;"></div>
<div class="a" style="left:487px;top:546px;width:1px;height:30px;background:#E4E4E4;"></div>
<div class="a" style="left:459px;top:666px;width:1px;height:30px;background:#E4E4E4;"></div>
<div class="t mono" style="left:429.3px;top:84px;font-size:12.5px;letter-spacing:-0.5px;color:#000"><b style="color:#000080">from</b> django.test <b style="color:#000080">import</b> RequestFactory</div>
<div class="t mono" style="left:429.3px;top:114px;font-size:12.5px;letter-spacing:-0.5px;color:#000"><b style="color:#000080">from</b> test_plus.test <b style="color:#000080">import</b> TestCase</div>
<div class="t mono" style="left:429.3px;top:144px;font-size:12.5px;letter-spacing:-0.5px;color:#000"><b style="color:#000080">from</b> ..views <b style="color:#000080">import</b> (</div>
<div class="t mono" style="left:429.3px;top:159px;font-size:12.5px;letter-spacing:-0.5px;color:#000">    UserRedirectView,</div>
<div class="t mono" style="left:429.3px;top:174px;font-size:12.5px;letter-spacing:-0.5px;color:#000">    UserUpdateView</div>
<div class="t mono" style="left:429.3px;top:189px;font-size:12.5px;letter-spacing:-0.5px;color:#000">)</div>
<div class="t mono" style="left:429.3px;top:234px;font-size:12.5px;letter-spacing:-0.5px;color:#000"><b style="color:#000080">class</b> BaseUserTestCase(TestCase):</div>
<div class="t mono" style="left:429.3px;top:264px;font-size:12.5px;letter-spacing:-0.5px;color:#000">    <b style="color:#000080">def</b> setUp(<span style="color:#94558D">self</span>):</div>
<div class="t mono" style="left:429.3px;top:279px;font-size:12.5px;letter-spacing:-0.5px;color:#000">        <span style="color:#94558D">self</span>.user = <span style="color:#94558D">self</span>.make_user()</div>
<div class="t mono" style="left:429.3px;top:294px;font-size:12.5px;letter-spacing:-0.5px;color:#000">        <span style="color:#94558D">self</span>.factory = RequestFactory()</div>
<div class="t mono" style="left:429.3px;top:339px;font-size:12.5px;letter-spacing:-0.5px;color:#000"><b style="color:#000080">class</b> TestUserRedirectView(BaseUserTestCase):</div>
<div class="t mono" style="left:429.3px;top:369px;font-size:12.5px;letter-spacing:-0.5px;color:#000">    <b style="color:#000080">def</b> test_get_redirect_url(<span style="color:#94558D">self</span>):</div>
<div class="t mono" style="left:429.3px;top:384px;font-size:12.5px;letter-spacing:-0.5px;color:#000">        <i style="color:#808080"># Instantiate the view directly. Never do this outside a test!</i></div>
<div class="t mono" style="left:429.3px;top:399px;font-size:12.5px;letter-spacing:-0.5px;color:#000">        view = UserRedirectView()</div>
<div class="t mono" style="left:429.3px;top:414px;font-size:12.5px;letter-spacing:-0.5px;color:#000">        <i style="color:#808080"># Generate a fake request</i></div>
<div class="t mono" style="left:429.3px;top:429px;font-size:12.5px;letter-spacing:-0.5px;color:#000">        request = <span style="color:#94558D">self</span>.factory.get(<b style="color:#008000">'/fake-url'</b>)</div>
<div class="t mono" style="left:429.3px;top:444px;font-size:12.5px;letter-spacing:-0.5px;color:#000">        <i style="color:#808080"># Attach the user to the request</i></div>
<div class="t mono" style="left:429.3px;top:459px;font-size:12.5px;letter-spacing:-0.5px;color:#000">        request.user = <span style="color:#94558D">self</span>.user</div>
<div class="t mono" style="left:429.3px;top:474px;font-size:12.5px;letter-spacing:-0.5px;color:#000">        <i style="color:#808080"># Attach the request to the view</i></div>
<div class="t mono" style="left:429.3px;top:489px;font-size:12.5px;letter-spacing:-0.5px;color:#000">        view.request = request</div>
<div class="t mono" style="left:429.3px;top:504px;font-size:12.5px;letter-spacing:-0.5px;color:#000">        <i style="color:#808080"># Expect: '/users/testuser/', as that is the default username for</i></div>
<div class="t mono" style="left:429.3px;top:519px;font-size:12.5px;letter-spacing:-0.5px;color:#000">        <i style="color:#808080">#   self.make_user()</i></div>
<div class="t mono" style="left:429.3px;top:534px;font-size:12.5px;letter-spacing:-0.5px;color:#000">        <span style="color:#94558D">self</span>.assertEqual(</div>
<div class="t mono" style="left:429.3px;top:549px;font-size:12.5px;letter-spacing:-0.5px;color:#000">            view.get_redirect_url(),</div>
<div class="t mono" style="left:429.3px;top:564px;font-size:12.5px;letter-spacing:-0.5px;color:#000">            <b style="color:#008000">'/users/testuser/'</b></div>
<div class="t mono" style="left:429.3px;top:579px;font-size:12.5px;letter-spacing:-0.5px;color:#000">        )</div>
<div class="t mono" style="left:429.3px;top:624px;font-size:12.5px;letter-spacing:-0.5px;color:#000"><b style="color:#000080">class</b> TestUserUpdateView(BaseUserTestCase):</div>
<div class="t mono" style="left:429.3px;top:654px;font-size:12.5px;letter-spacing:-0.5px;color:#000">    <b style="color:#000080">def</b> setUp(<span style="color:#94558D">self</span>):</div>
<div class="t mono" style="left:429.3px;top:669px;font-size:12.5px;letter-spacing:-0.5px;color:#000">        <i style="color:#808080"># call BaseUserTestCase.setUp()</i></div>
<div class="t mono" style="left:429.3px;top:684px;font-size:12.5px;letter-spacing:-0.5px;color:#000">        <span style="color:#000080">super</span>(TestUserUpdateView, <span style="color:#94558D">self</span>).setUp()</div>
<div class="a" style="left:429px;top:201px;width:2px;height:15px;background:#000;"></div>
<div class="a" style="left:423px;top:201px;width:1px;height:15px;background:#D0D0D0;"></div>
<svg style="left:419px;top:85px" width="9" height="11" viewBox="0 0 9 11"><path d="M0.5 0.5H8.5V7L4.5 10.5L0.5 7Z" fill="#fff" stroke="#BDBDBD" stroke-width="1"/><path d="M2.5 4.5H6.5" stroke="#BDBDBD" stroke-width="1"/></svg>
<svg style="left:419px;top:235px" width="9" height="11" viewBox="0 0 9 11"><path d="M0.5 0.5H8.5V7L4.5 10.5L0.5 7Z" fill="#fff" stroke="#BDBDBD" stroke-width="1"/><path d="M2.5 4.5H6.5" stroke="#BDBDBD" stroke-width="1"/></svg>
<svg style="left:419px;top:265px" width="9" height="11" viewBox="0 0 9 11"><path d="M0.5 0.5H8.5V7L4.5 10.5L0.5 7Z" fill="#fff" stroke="#BDBDBD" stroke-width="1"/><path d="M2.5 4.5H6.5" stroke="#BDBDBD" stroke-width="1"/></svg>
<svg style="left:419px;top:340px" width="9" height="11" viewBox="0 0 9 11"><path d="M0.5 0.5H8.5V7L4.5 10.5L0.5 7Z" fill="#fff" stroke="#BDBDBD" stroke-width="1"/><path d="M2.5 4.5H6.5" stroke="#BDBDBD" stroke-width="1"/></svg>
<svg style="left:419px;top:370px" width="9" height="11" viewBox="0 0 9 11"><path d="M0.5 0.5H8.5V7L4.5 10.5L0.5 7Z" fill="#fff" stroke="#BDBDBD" stroke-width="1"/><path d="M2.5 4.5H6.5" stroke="#BDBDBD" stroke-width="1"/></svg>
<svg style="left:419px;top:505px" width="9" height="11" viewBox="0 0 9 11"><path d="M0.5 0.5H8.5V7L4.5 10.5L0.5 7Z" fill="#fff" stroke="#BDBDBD" stroke-width="1"/><path d="M2.5 4.5H6.5" stroke="#BDBDBD" stroke-width="1"/></svg>
<svg style="left:419px;top:625px" width="9" height="11" viewBox="0 0 9 11"><path d="M0.5 0.5H8.5V7L4.5 10.5L0.5 7Z" fill="#fff" stroke="#BDBDBD" stroke-width="1"/><path d="M2.5 4.5H6.5" stroke="#BDBDBD" stroke-width="1"/></svg>
<svg style="left:419px;top:655px" width="9" height="11" viewBox="0 0 9 11"><path d="M0.5 0.5H8.5V7L4.5 10.5L0.5 7Z" fill="#fff" stroke="#BDBDBD" stroke-width="1"/><path d="M2.5 4.5H6.5" stroke="#BDBDBD" stroke-width="1"/></svg>
<svg style="left:419px;top:188px" width="9" height="11" viewBox="0 0 9 11"><path d="M0.5 10.5H8.5V4L4.5 0.5L0.5 4Z" fill="#fff" stroke="#BDBDBD" stroke-width="1"/><path d="M2.5 6.5H6.5" stroke="#BDBDBD" stroke-width="1"/></svg>
<svg style="left:419px;top:293px" width="9" height="11" viewBox="0 0 9 11"><path d="M0.5 10.5H8.5V4L4.5 0.5L0.5 4Z" fill="#fff" stroke="#BDBDBD" stroke-width="1"/><path d="M2.5 6.5H6.5" stroke="#BDBDBD" stroke-width="1"/></svg>
<svg style="left:419px;top:518px" width="9" height="11" viewBox="0 0 9 11"><path d="M0.5 10.5H8.5V4L4.5 0.5L0.5 4Z" fill="#fff" stroke="#BDBDBD" stroke-width="1"/><path d="M2.5 6.5H6.5" stroke="#BDBDBD" stroke-width="1"/></svg>
<svg style="left:419px;top:578px" width="9" height="11" viewBox="0 0 9 11"><path d="M0.5 10.5H8.5V4L4.5 0.5L0.5 4Z" fill="#fff" stroke="#BDBDBD" stroke-width="1"/><path d="M2.5 6.5H6.5" stroke="#BDBDBD" stroke-width="1"/></svg>
<svg style="left:395px;top:232px" width="12" height="13" viewBox="0 0 12 13"><circle cx="4" cy="5.3" r="4" fill="#6AB2E2"/><circle cx="4" cy="5.3" r="1.7" fill="none" stroke="#4A4A4A" stroke-width="1.1"/><path d="M9.4 0V11" stroke="#4A4A4A" stroke-width="1.1"/><path d="M7 9H11.8L9.4 12Z" fill="#4A4A4A"/></svg>
<svg style="left:380px;top:262px" width="12" height="13" viewBox="0 0 12 13"><circle cx="4" cy="7.2" r="4" fill="#6AB2E2"/><circle cx="4" cy="7.2" r="1.7" fill="none" stroke="#4A4A4A" stroke-width="1.1"/><path d="M9.4 2V12" stroke="#D2503F" stroke-width="1.1"/><path d="M7 3H11.8L9.4 0Z" fill="#D2503F"/></svg>
<svg style="left:395px;top:262px" width="12" height="13" viewBox="0 0 12 13"><circle cx="4" cy="5.3" r="4" fill="#6AB2E2"/><circle cx="4" cy="5.3" r="1.7" fill="none" stroke="#4A4A4A" stroke-width="1.1"/><path d="M9.4 0V11" stroke="#4A4A4A" stroke-width="1.1"/><path d="M7 9H11.8L9.4 12Z" fill="#4A4A4A"/></svg>
<svg style="left:395px;top:652px" width="12" height="13" viewBox="0 0 12 13"><circle cx="4" cy="7.2" r="4" fill="#6AB2E2"/><circle cx="4" cy="7.2" r="1.7" fill="none" stroke="#4A4A4A" stroke-width="1.1"/><path d="M9.4 2V12" stroke="#D2503F" stroke-width="1.1"/><path d="M7 3H11.8L9.4 0Z" fill="#D2503F"/></svg>
<svg style="left:611px;top:514px" width="57" height="3" viewBox="0 0 57 3"><path d="M0 2L1 0L2 2L3 0L4 2L5 0L6 2L7 0L8 2L9 0L10 2L11 0L12 2L13 0L14 2L15 0L16 2L17 0L18 2L19 0L20 2L21 0L22 2L23 0L24 2L25 0L26 2L27 0L28 2L29 0L30 2L31 0L32 2L33 0L34 2L35 0L36 2L37 0L38 2L39 0L40 2L41 0L42 2L43 0L44 2L45 0L46 2L47 0L48 2L49 0L50 2L51 0L52 2L53 0L54 2L55 0L56 2" stroke="#B4D6B4" stroke-width="0.9" fill="none"/></svg>
<svg style="left:569px;top:574px" width="57" height="3" viewBox="0 0 57 3"><path d="M0 2L1 0L2 2L3 0L4 2L5 0L6 2L7 0L8 2L9 0L10 2L11 0L12 2L13 0L14 2L15 0L16 2L17 0L18 2L19 0L20 2L21 0L22 2L23 0L24 2L25 0L26 2L27 0L28 2L29 0L30 2L31 0L32 2L33 0L34 2L35 0L36 2L37 0L38 2L39 0L40 2L41 0L42 2L43 0L44 2L45 0L46 2L47 0L48 2L49 0L50 2L51 0L52 2L53 0L54 2L55 0L56 2" stroke="#B4D6B4" stroke-width="0.9" fill="none"/></svg>
<div class="a" style="left:1423px;top:28px;width:163px;height:19px;background:linear-gradient(#F7F7F7,#E3E3E3);border:1px solid #A9A9A9;border-radius:3px"></div>
<svg style="left:1429px;top:30px" width="15" height="16" viewBox="0 0 15 16"><rect x="0" y="0" width="14" height="14" rx="1.5" fill="#0C4B33"/><text x="1.6" y="11.3" font-family="Liberation Sans" font-weight="bold" font-size="12" fill="#fff">dj</text><path d="M8 11L11 13.5L8 16Z" fill="#E05050"/><path d="M11 11L14 13.5L11 16Z" fill="#3EAF4A"/></svg>
<div class="t" style="left:1447px;top:31px;font-size:15.5px;color:#000;letter-spacing:0.15px">Docker: tests - all</div>
<svg style="left:1572px;top:37px" width="9" height="5" viewBox="0 0 9 5"><path d="M0 0H9L4.5 5Z" fill="#8A8A8A"/></svg>
<svg style="left:1595px;top:30px" width="11" height="15" viewBox="0 0 11 15"><path d="M0 0L11 7.2L0 14.5Z" fill="#3EAA4A"/></svg>
<svg style="left:1617px;top:29px" width="16" height="16" viewBox="0 0 16 16"><path d="M2.5 1L4 3M6 0.5V3M9.5 1L8 3M2.5 15L4 13M6 15.5V13M9.5 15L8 13" stroke="#555" stroke-width="1.1"/><circle cx="6" cy="8" r="5.4" fill="#3FAE4B"/><circle cx="12.2" cy="8" r="3.6" fill="#E8E8E8"/><circle cx="12.4" cy="8" r="2.3" fill="#686868"/><path d="M13.5 4Q15.5 4.5 15.3 6M13.5 12Q15.5 11.5 15.3 10" stroke="#555" stroke-width="1" fill="none"/></svg>
<svg style="left:1643px;top:30px" width="15" height="15" viewBox="0 0 15 15"><g fill="#5E5E5E"><rect x="4.2" y="0.19999999999999996" width="1.6" height="1.6"/><rect x="8.2" y="0.19999999999999996" width="1.6" height="1.6"/><rect x="6.2" y="2.2" width="1.6" height="1.6"/><rect x="10.2" y="2.2" width="1.6" height="1.6"/><rect x="4.2" y="4.2" width="1.6" height="1.6"/><rect x="8.2" y="4.2" width="1.6" height="1.6"/><rect x="12.2" y="4.2" width="1.6" height="1.6"/><rect x="6.2" y="6.2" width="1.6" height="1.6"/><rect x="10.2" y="6.2" width="1.6" height="1.6"/><rect x="4.2" y="8.2" width="1.6" height="1.6"/><rect x="8.2" y="8.2" width="1.6" height="1.6"/><rect x="12.2" y="8.2" width="1.6" height="1.6"/><rect x="6.2" y="10.2" width="1.6" height="1.6"/><rect x="10.2" y="10.2" width="1.6" height="1.6"/><rect x="4.2" y="12.2" width="1.6" height="1.6"/><rect x="8.2" y="12.2" width="1.6" height="1.6"/></g><path d="M0 2L6 7L0 12Z" fill="#3FAE4B"/></svg>
<svg style="left:1668px;top:30px" width="16" height="16" viewBox="0 0 16 16"><circle cx="7" cy="7" r="6.2" fill="none" stroke="#7A7A7A" stroke-width="1.1"/><path d="M3.5 4L6.5 7L3.5 10" stroke="#555" stroke-width="1.1" fill="none"/><path d="M7 3.5V4.5" stroke="#555"/><path d="M8 5L15 10L8 15Z" fill="#3FAE4B"/></svg>
<svg style="left:1693px;top:30px" width="16" height="16" viewBox="0 0 16 16"><rect x="0" y="1" width="15" height="2" fill="#C49A62"/><rect x="0" y="4.5" width="12" height="2" fill="#4A90C8"/><rect x="0" y="8" width="7" height="2" fill="#C49A62"/><rect x="0" y="11.5" width="7" height="2" fill="#4A90C8"/><path d="M8 5L15 10L8 15Z" fill="#4CAB5A"/></svg>
<div class="a" style="left:1716px;top:28px;width:1px;height:20px;background:#C4C4C4;"></div>
<svg style="left:1724px;top:30px" width="15" height="16" viewBox="0 0 15 16"><text x="0" y="7" font-family="Liberation Sans" font-size="9" fill="#555" letter-spacing="-0.1">VCS</text><g fill="#3C8CC8"><path d="M5.5 8H9.5V11H12.5L7.5 15.5L2.5 11H5.5Z"/></g></svg>
<svg style="left:1749px;top:30px" width="15" height="16" viewBox="0 0 15 16"><text x="0" y="7" font-family="Liberation Sans" font-size="9" fill="#555" letter-spacing="-0.1">VCS</text><g fill="#3EAA4A"><path d="M7.5 8L12.5 12.5H9.5V15.5H5.5V12.5H2.5Z"/></g></svg>
<svg style="left:1774px;top:29px" width="16" height="16" viewBox="0 0 16 16"><rect x="1" y="4" width="9" height="9" fill="none" stroke="#7A7A7A" stroke-width="2"/><rect x="5" y="8" width="9" height="7" fill="none" stroke="#9A9A9A" stroke-width="1.5"/><circle cx="11" cy="5" r="4.5" fill="#8BC8F0" stroke="#3C8CC8" stroke-width="1"/><path d="M11 2.5V5H13" stroke="#1C5C98" stroke-width="1" fill="none"/></svg>
<svg style="left:1799px;top:31px" width="14" height="13" viewBox="0 0 14 13"><path d="M2 5H9A4 4 0 0 1 9 13H4" stroke="#7E7E7E" stroke-width="2.2" fill="none"/><path d="M0 5L5 0V10Z" fill="#7E7E7E"/></svg>
<div class="a" style="left:1822px;top:28px;width:1px;height:20px;background:#C4C4C4;"></div>
<svg style="left:1835px;top:32px" width="15" height="14" viewBox="0 0 15 14"><circle cx="5.8" cy="5.8" r="4.6" fill="none" stroke="#828282" stroke-width="2"/><path d="M9 9L14 13.5" stroke="#828282" stroke-width="2.6"/></svg>
<div class="t" style="left:11.8px;top:95px;font-size:13px;color:#000;letter-spacing:-0.145px;transform:translate(-50%,-50%) rotate(-90deg)"><span class="u">1</span>:Project</div>
<svg style="left:4px;top:122px" width="14" height="13" viewBox="0 0 14 13"><path d="M0 2H4L5 3.5H11V6H5V13H0Z" fill="#D98F2E"/><rect x="5" y="6" width="8" height="7" fill="#555"/><rect x="7.5" y="10" width="3" height="1.3" fill="#fff"/></svg>
<div class="t" style="left:11.8px;top:197px;font-size:13px;color:#000;letter-spacing:0.219px;transform:translate(-50%,-50%) rotate(-90deg)"><span class="u">7</span>:Structure</div>
<svg style="left:4px;top:233px" width="14" height="14" viewBox="0 0 14 14"><circle cx="3" cy="3" r="2.8" fill="#5BA4D9"/><circle cx="11" cy="3" r="2.8" fill="#E46A6A"/><circle cx="7" cy="11" r="2.8" fill="#D9A060"/><path d="M3 3L7 11L11 3" stroke="#555" stroke-width="1" fill="none"/></svg>
<div class="t" style="left:11.8px;top:952.5px;font-size:13px;color:#000;letter-spacing:-0.573px;transform:translate(-50%,-50%) rotate(-90deg)"><span class="u">2</span>:Favorites</div>
<svg style="left:5px;top:986px" width="13" height="13" viewBox="0 0 13 13"><path d="M6.5 0L8.4 4.4L13 4.8L9.5 7.9L10.5 12.6L6.5 10.2L2.5 12.6L3.5 7.9L0 4.8L4.6 4.4Z" fill="#E49A2E"/></svg>
<svg style="left:1837px;top:61px" width="15" height="15" viewBox="0 0 15 15"><path d="M0 2H6V4H2V14H0Z" fill="#3C8CC8"/><rect x="3" y="5" width="11" height="10" fill="#7E7E7E"/><g fill="#EDEDED"><rect x="5" y="7" width="2" height="1.5"/><rect x="8" y="7" width="2" height="1.5"/><rect x="11" y="7" width="2" height="1.5"/><rect x="5" y="10" width="2" height="1.5"/><rect x="8" y="10" width="2" height="1.5"/><rect x="11" y="10" width="2" height="1.5"/></g></svg>
<div class="t" style="left:1843px;top:108.5px;font-size:13px;color:#000;letter-spacing:0.169px;transform:translate(-50%,-50%) rotate(90deg)">Database</div>
<svg style="left:1818px;top:82px" width="13" height="13" viewBox="0 0 13 13"><path d="M1.5 4L5 7.5L11 1.5" stroke="#4FA34F" stroke-width="2.6" fill="none"/><path d="M1 11.5L3 9.5L5 11.5L7 9.5L9 11.5L11 9.5" stroke="#5DAA5D" stroke-width="0.9" fill="none"/></svg>
<div class="t" style="left:28px;top:702px;font-size:13.5px;color:#6E6E6E;letter-spacing:-1.255px;">Run</div>
<svg style="left:54px;top:701px" width="15" height="16" viewBox="0 0 15 16"><rect x="0" y="0" width="14" height="14" rx="1.5" fill="#9DB8A8"/><text x="1.6" y="11.3" font-family="Liberation Sans" font-weight="bold" font-size="12" fill="#fff">dj</text><path d="M8 11L11 13.5L8 16Z" fill="#E05050"/><path d="M11 11L14 13.5L11 16Z" fill="#3EAF4A"/></svg>
<div class="t" style="left:73px;top:702px;font-size:13.5px;color:#6E6E6E;letter-spacing:0.196px;">Docker: tests - all</div>
<svg style="left:1785px;top:702px" width="20" height="13" viewBox="0 0 20 13"><g transform="translate(6.5 6.5)"><circle r="4.3" fill="#7E7E7E"/><rect x="-1.5" y="-6.5" width="3" height="3.5" fill="#7E7E7E" transform="rotate(0)"/><rect x="-1.5" y="-6.5" width="3" height="3.5" fill="#7E7E7E" transform="rotate(45)"/><rect x="-1.5" y="-6.5" width="3" height="3.5" fill="#7E7E7E" transform="rotate(90)"/><rect x="-1.5" y="-6.5" width="3" height="3.5" fill="#7E7E7E" transform="rotate(135)"/><rect x="-1.5" y="-6.5" width="3" height="3.5" fill="#7E7E7E" transform="rotate(180)"/><rect x="-1.5" y="-6.5" width="3" height="3.5" fill="#7E7E7E" transform="rotate(225)"/><rect x="-1.5" y="-6.5" width="3" height="3.5" fill="#7E7E7E" transform="rotate(270)"/><rect x="-1.5" y="-6.5" width="3" height="3.5" fill="#7E7E7E" transform="rotate(315)"/><circle r="1.8" fill="#E4E4E4"/></g><path d="M14 8H19L16.5 11Z" fill="#7E7E7E"/></svg>
<svg style="left:1814px;top:702px" width="11" height="13" viewBox="0 0 11 13"><path d="M5.5 0V7" stroke="#7E7E7E" stroke-width="1.2"/><path d="M2.5 5H8.5L5.5 8.5Z" fill="#7E7E7E"/><rect x="0" y="10" width="11" height="3" fill="#7E7E7E"/><rect x="6" y="11" width="4" height="1" fill="#fff"/></svg>
<svg style="left:32px;top:727px" width="11" height="14" viewBox="0 0 11 14"><path d="M0 0L11 7L0 14Z" fill="#3EAA4A"/></svg>
<svg style="left:30px;top:752px" width="14" height="14" viewBox="0 0 14 14"><path d="M0 4L6 8L0 12Z" fill="#9A9A9A"/><circle cx="8" cy="7" r="5.5" fill="#9A9A9A"/><circle cx="8" cy="7" r="3" fill="#B4B4B4"/></svg>
<svg style="left:29px;top:776px" width="15" height="16" viewBox="0 0 15 16"><path d="M2 2H9V6M13 14H6V10" stroke="#888" stroke-width="2" fill="none"/><path d="M9 6L6.5 3.5M9 6L11.5 3.5" stroke="#3EAA4A" stroke-width="2"/><path d="M1 9Q1 4 7 4" stroke="#3EAA4A" stroke-width="2" fill="none"/><path d="M14 7Q14 12 8 12" stroke="#3EAA4A" stroke-width="2" fill="none"/></svg>
<div class="a" style="left:28px;top:800px;width:20px;height:1px;background:#CFCFCF;"></div>
<div class="a" style="left:31px;top:808px;width:13px;height:13px;background:#8E8E8E;"></div>
<div class="a" style="left:28px;top:831px;width:20px;height:1px;background:#CFCFCF;"></div>
<svg style="left:30px;top:838px" width="14" height="14" viewBox="0 0 14 14"><rect x="0" y="1" width="6" height="5" fill="none" stroke="#7A7A7A" stroke-width="1.4"/><rect x="8" y="1" width="6" height="5" fill="none" stroke="#5A9FD4" stroke-width="1.4"/><rect x="0" y="8" width="14" height="5" fill="none" stroke="#7A7A7A" stroke-width="1.4"/></svg>
<div class="a" style="left:28px;top:862px;width:20px;height:1px;background:#CFCFCF;"></div>
<svg style="left:30px;top:869px" width="14" height="14" viewBox="0 0 14 14"><path d="M3 11L1 13" stroke="#8A8A8A" stroke-width="1.5"/><path d="M4 7L7 10L12 5L9 2Z" fill="#8C6FB8"/><path d="M2 6L8 12" stroke="#8C6FB8" stroke-width="2"/><circle cx="10.5" cy="3.5" r="2.5" fill="#9F86C8"/></svg>
<svg style="left:31px;top:895px" width="13" height="13" viewBox="0 0 13 13"><path d="M1.5 1.5L11.5 11.5M11.5 1.5L1.5 11.5" stroke="#DC5B50" stroke-width="2.4"/></svg>
<svg style="left:32px;top:919px" width="11" height="15" viewBox="0 0 11 15"><text x="0" y="13.5" font-family="Liberation Sans" font-weight="bold" font-size="17" fill="#3C8CC8">?</text></svg>
<div class="a" style="left:56px;top:723px;width:23px;height:23px;background:#A9A9A9;border:1px solid #7C7C7C;border-radius:3px"></div>
<svg style="left:60px;top:727px" width="14" height="14" viewBox="0 0 14 14"><defs><radialGradient id="okg" cx="50%" cy="35%" r="60%"><stop offset="0" stop-color="#A8E8A0"/><stop offset="1" stop-color="#5CBA5C"/></radialGradient></defs><circle cx="7" cy="7" r="7" fill="url(#okg)"/><text x="7" y="9.4" text-anchor="middle" font-family="Liberation Sans" font-weight="bold" font-size="6.2" fill="#3E5E3E">OK</text></svg>
<div class="a" style="left:81px;top:723px;width:23px;height:23px;background:#A9A9A9;border:1px solid #7C7C7C;border-radius:3px"></div>
<svg style="left:84px;top:726px" width="17" height="17" viewBox="0 0 17 17"><circle cx="8.5" cy="8.5" r="7" fill="#F0B060"/><rect x="1" y="2.0" width="15" height="0.8" fill="#555" opacity=".7"/><rect x="1" y="4.2" width="15" height="0.8" fill="#555" opacity=".7"/><rect x="1" y="6.4" width="15" height="0.8" fill="#555" opacity=".7"/><rect x="1" y="8.6" width="15" height="0.8" fill="#555" opacity=".7"/><rect x="1" y="10.8" width="15" height="0.8" fill="#555" opacity=".7"/><rect x="1" y="13.0" width="15" height="0.8" fill="#555" opacity=".7"/><rect x="1" y="15.2" width="15" height="0.8" fill="#555" opacity=".7"/></svg>
<div class="a" style="left:108px;top:724px;width:1px;height:22px;background:#C4C4C4;"></div>
<svg style="left:116px;top:726px" width="14" height="15" viewBox="0 0 14 15"><path d="M3.5 1V13M0.5 10L3.5 13.5L6.5 10" stroke="#6E6E6E" stroke-width="1.3" fill="none"/><text x="7" y="7" font-family="Liberation Sans" font-size="8.5" fill="#3C8CC8">a</text><text x="7" y="14.5" font-family="Liberation Sans" font-size="8.5" fill="#A060C0">z</text></svg>
<svg style="left:141px;top:727px" width="15" height="14" viewBox="0 0 15 14"><path d="M3.5 0V12M0.5 9L3.5 12.5L6.5 9" stroke="#6E6E6E" stroke-width="1.3" fill="none"/><rect x="6" y="0" width="8" height="1.6" fill="#3C8CC8"/><rect x="6" y="4" width="6" height="1.6" fill="#C08A50"/><rect x="6" y="8" width="4" height="1.6" fill="#A060C0"/><rect x="8" y="12" width="2" height="1.6" fill="#2EA040"/></svg>
<div class="a" style="left:164px;top:724px;width:1px;height:22px;background:#C4C4C4;"></div>
<svg style="left:172px;top:727px" width="13" height="14" viewBox="0 0 13 14"><rect x="0" y="0" width="13" height="1.5" fill="#6E6E6E"/><rect x="0" y="12.5" width="13" height="1.5" fill="#6E6E6E"/><path d="M6.5 2.5L10 6H3Z M6.5 11.5L10 8H3Z" fill="#3C8CC8"/></svg>
<svg style="left:198px;top:727px" width="13" height="14" viewBox="0 0 13 14"><rect x="0" y="5" width="13" height="1.5" fill="#6E6E6E"/><rect x="0" y="8" width="13" height="1.5" fill="#6E6E6E"/><path d="M3 0.5H10L6.5 4Z M3 13.5H10L6.5 10Z" fill="#3C8CC8"/></svg>
<div class="a" style="left:220px;top:724px;width:1px;height:22px;background:#C4C4C4;"></div>
<svg style="left:229px;top:728px" width="12" height="12" viewBox="0 0 12 12"><path d="M6 0L12 6H8.5V12H3.5V6H0Z" fill="#8C8C8C"/></svg>
<svg style="left:254px;top:728px" width="12" height="12" viewBox="0 0 12 12"><path d="M6 12L12 6H8.5V0H3.5V6H0Z" fill="#8C8C8C"/></svg>
<svg style="left:279px;top:726px" width="15" height="16" viewBox="0 0 15 16"><path d="M1 2H6M1 2V15H11V9" stroke="#7A7A7A" stroke-width="2" fill="none"/><path d="M7 12Q10 10 10 5H7.5L11 0.5L14.5 5H12Q12 11 7 12Z" fill="#2EA040"/></svg>
<svg style="left:303px;top:726px" width="17" height="17" viewBox="0 0 17 17"><rect x="1" y="2" width="8" height="8" fill="none" stroke="#7A7A7A" stroke-width="1.8"/><rect x="3" y="12" width="8" height="1.6" fill="#9A9A9A"/><circle cx="10" cy="5" r="4.8" fill="#8CCBF2" stroke="#3C8CC8" stroke-width="0.8"/><path d="M10 2.5V5.3H12.5" stroke="#333" stroke-width="0.9" fill="none"/><path d="M11 14H16L13.5 16.5Z" fill="#555"/></svg>
<svg style="left:328px;top:727px" width="18" height="16" viewBox="0 0 18 16"><g transform="translate(6.5 6.5)"><circle r="4.5" fill="#3C8CD0"/><rect x="-1.7" y="-6.5" width="3.4" height="3.5" fill="#3C8CD0" transform="rotate(0)"/><rect x="-1.7" y="-6.5" width="3.4" height="3.5" fill="#3C8CD0" transform="rotate(45)"/><rect x="-1.7" y="-6.5" width="3.4" height="3.5" fill="#3C8CD0" transform="rotate(90)"/><rect x="-1.7" y="-6.5" width="3.4" height="3.5" fill="#3C8CD0" transform="rotate(135)"/><rect x="-1.7" y="-6.5" width="3.4" height="3.5" fill="#3C8CD0" transform="rotate(180)"/><rect x="-1.7" y="-6.5" width="3.4" height="3.5" fill="#3C8CD0" transform="rotate(225)"/><rect x="-1.7" y="-6.5" width="3.4" height="3.5" fill="#3C8CD0" transform="rotate(270)"/><rect x="-1.7" y="-6.5" width="3.4" height="3.5" fill="#3C8CD0" transform="rotate(315)"/><circle r="1.8" fill="#E8E8E8"/></g><path d="M12 12H17L14.5 15Z" fill="#555"/></svg>
<div class="a" style="left:524px;top:729px;width:432px;height:12px;background:#6BAE72;border:1px solid #8DBF92;border-radius:6px;box-shadow:inset 0 0 0 1px #E6F2E6"></div>
<div class="t" style="left:969px;top:727px;font-size:15px;color:#000;letter-spacing:0.024px;">All 7 tests passed</div>
<div class="t" style="left:1090px;top:727px;font-size:15px;color:#8A8A8A;letter-spacing:-0.647px;">– 328ms</div>
<svg style="left:59px;top:757px" width="9" height="8" viewBox="0 0 9 8"><path fill="#A6A6A6" d="M0 0H9L4.5 8Z"/></svg>
<svg style="left:79px;top:753px" width="14" height="14" viewBox="0 0 14 14"><defs><radialGradient id="okg" cx="50%" cy="35%" r="60%"><stop offset="0" stop-color="#A8E8A0"/><stop offset="1" stop-color="#5CBA5C"/></radialGradient></defs><circle cx="7" cy="7" r="7" fill="url(#okg)"/><text x="7" y="9.4" text-anchor="middle" font-family="Liberation Sans" font-weight="bold" font-size="6.2" fill="#3E5E3E">OK</text></svg>
<div class="t" style="left:97px;top:752px;font-size:15.0px;color:#000;letter-spacing:0.126px;">Test Results</div>
<div class="t" style="left:476.0px;top:754px;font-size:13.3px;color:#F7F7F7;letter-spacing:-0.684px;">328ms</div>
<svg style="left:79px;top:777px" width="9" height="8" viewBox="0 0 9 8"><path fill="#A6A6A6" d="M0 0H9L4.5 8Z"/></svg>
<svg style="left:99px;top:773px" width="14" height="14" viewBox="0 0 14 14"><defs><radialGradient id="okg" cx="50%" cy="35%" r="60%"><stop offset="0" stop-color="#A8E8A0"/><stop offset="1" stop-color="#5CBA5C"/></radialGradient></defs><circle cx="7" cy="7" r="7" fill="url(#okg)"/><text x="7" y="9.4" text-anchor="middle" font-family="Liberation Sans" font-weight="bold" font-size="6.2" fill="#3E5E3E">OK</text></svg>
<div class="t" style="left:117px;top:772px;font-size:15.0px;color:#000;letter-spacing:0.438px;">reddit.users.tests.test_models.TestUser</div>
<div class="t" style="left:482.5px;top:774px;font-size:13.3px;color:#8E8E8E;letter-spacing:-0.631px;">89ms</div>
<svg style="left:119px;top:793px" width="14" height="14" viewBox="0 0 14 14"><defs><radialGradient id="okg" cx="50%" cy="35%" r="60%"><stop offset="0" stop-color="#A8E8A0"/><stop offset="1" stop-color="#5CBA5C"/></radialGradient></defs><circle cx="7" cy="7" r="7" fill="url(#okg)"/><text x="7" y="9.4" text-anchor="middle" font-family="Liberation Sans" font-weight="bold" font-size="6.2" fill="#3E5E3E">OK</text></svg>
<div class="t" style="left:137px;top:792px;font-size:15.0px;color:#000;letter-spacing:0.072px;">test__str__</div>
<div class="t" style="left:482.5px;top:794px;font-size:13.3px;color:#8E8E8E;letter-spacing:-0.631px;">45ms</div>
<svg style="left:119px;top:813px" width="14" height="14" viewBox="0 0 14 14"><defs><radialGradient id="okg" cx="50%" cy="35%" r="60%"><stop offset="0" stop-color="#A8E8A0"/><stop offset="1" stop-color="#5CBA5C"/></radialGradient></defs><circle cx="7" cy="7" r="7" fill="url(#okg)"/><text x="7" y="9.4" text-anchor="middle" font-family="Liberation Sans" font-weight="bold" font-size="6.2" fill="#3E5E3E">OK</text></svg>
<div class="t" style="left:137px;top:812px;font-size:15.0px;color:#000;letter-spacing:0.432px;">test_get_absolute_url</div>
<div class="t" style="left:482.5px;top:814px;font-size:13.3px;color:#8E8E8E;letter-spacing:-0.631px;">44ms</div>
<svg style="left:79px;top:837px" width="9" height="8" viewBox="0 0 9 8"><path fill="#A6A6A6" d="M0 0H9L4.5 8Z"/></svg>
<svg style="left:99px;top:833px" width="14" height="14" viewBox="0 0 14 14"><defs><radialGradient id="okg" cx="50%" cy="35%" r="60%"><stop offset="0" stop-color="#A8E8A0"/><stop offset="1" stop-color="#5CBA5C"/></radialGradient></defs><circle cx="7" cy="7" r="7" fill="url(#okg)"/><text x="7" y="9.4" text-anchor="middle" font-family="Liberation Sans" font-weight="bold" font-size="6.2" fill="#3E5E3E">OK</text></svg>
<div class="t" style="left:117px;top:832px;font-size:15.0px;color:#000;letter-spacing:0.391px;">reddit.users.tests.test_views.TestUserRedirectView</div>
<div class="t" style="left:482.5px;top:834px;font-size:13.3px;color:#8E8E8E;letter-spacing:-0.631px;">40ms</div>
<svg style="left:119px;top:853px" width="14" height="14" viewBox="0 0 14 14"><defs><radialGradient id="okg" cx="50%" cy="35%" r="60%"><stop offset="0" stop-color="#A8E8A0"/><stop offset="1" stop-color="#5CBA5C"/></radialGradient></defs><circle cx="7" cy="7" r="7" fill="url(#okg)"/><text x="7" y="9.4" text-anchor="middle" font-family="Liberation Sans" font-weight="bold" font-size="6.2" fill="#3E5E3E">OK</text></svg>
<div class="t" style="left:137px;top:852px;font-size:15.0px;color:#000;letter-spacing:0.536px;">test_get_redirect_url</div>
<div class="t" style="left:482.5px;top:854px;font-size:13.3px;color:#8E8E8E;letter-spacing:-0.631px;">40ms</div>
<svg style="left:79px;top:877px" width="9" height="8" viewBox="0 0 9 8"><path fill="#A6A6A6" d="M0 0H9L4.5 8Z"/></svg>
<svg style="left:99px;top:873px" width="14" height="14" viewBox="0 0 14 14"><defs><radialGradient id="okg" cx="50%" cy="35%" r="60%"><stop offset="0" stop-color="#A8E8A0"/><stop offset="1" stop-color="#5CBA5C"/></radialGradient></defs><circle cx="7" cy="7" r="7" fill="url(#okg)"/><text x="7" y="9.4" text-anchor="middle" font-family="Liberation Sans" font-weight="bold" font-size="6.2" fill="#3E5E3E">OK</text></svg>
<div class="t" style="left:117px;top:872px;font-size:15.0px;color:#000;letter-spacing:0.419px;">reddit.users.tests.test_views.TestUserUpdateView</div>
<div class="t" style="left:482.5px;top:874px;font-size:13.3px;color:#8E8E8E;letter-spacing:-0.631px;">96ms</div>
<svg style="left:119px;top:893px" width="14" height="14" viewBox="0 0 14 14"><defs><radialGradient id="okg" cx="50%" cy="35%" r="60%"><stop offset="0" stop-color="#A8E8A0"/><stop offset="1" stop-color="#5CBA5C"/></radialGradient></defs><circle cx="7" cy="7" r="7" fill="url(#okg)"/><text x="7" y="9.4" text-anchor="middle" font-family="Liberation Sans" font-weight="bold" font-size="6.2" fill="#3E5E3E">OK</text></svg>
<div class="t" style="left:137px;top:892px;font-size:15.0px;color:#000;letter-spacing:0.497px;">test_get_object</div>
<div class="t" style="left:482.5px;top:894px;font-size:13.3px;color:#8E8E8E;letter-spacing:-0.631px;">42ms</div>
<svg style="left:119px;top:913px" width="14" height="14" viewBox="0 0 14 14"><defs><radialGradient id="okg" cx="50%" cy="35%" r="60%"><stop offset="0" stop-color="#A8E8A0"/><stop offset="1" stop-color="#5CBA5C"/></radialGradient></defs><circle cx="7" cy="7" r="7" fill="url(#okg)"/><text x="7" y="9.4" text-anchor="middle" font-family="Liberation Sans" font-weight="bold" font-size="6.2" fill="#3E5E3E">OK</text></svg>
<div class="t" style="left:137px;top:912px;font-size:15.0px;color:#000;letter-spacing:0.285px;">test_get_success_url</div>
<div class="t" style="left:482.5px;top:914px;font-size:13.3px;color:#8E8E8E;letter-spacing:-0.631px;">54ms</div>
<svg style="left:79px;top:937px" width="9" height="8" viewBox="0 0 9 8"><path fill="#A6A6A6" d="M0 0H9L4.5 8Z"/></svg>
<svg style="left:99px;top:933px" width="14" height="14" viewBox="0 0 14 14"><defs><radialGradient id="okg" cx="50%" cy="35%" r="60%"><stop offset="0" stop-color="#A8E8A0"/><stop offset="1" stop-color="#5CBA5C"/></radialGradient></defs><circle cx="7" cy="7" r="7" fill="url(#okg)"/><text x="7" y="9.4" text-anchor="middle" font-family="Liberation Sans" font-weight="bold" font-size="6.2" fill="#3E5E3E">OK</text></svg>
<div class="a" style="left:117px;top:929px;width:354px;height:20px;overflow:hidden">
<div class="t" style="left:0px;top:3px;font-size:15.0px;color:#000;letter-spacing:0.383px">reddit.users.tests.test_admin.TestMyUserCreationI</div>
</div>
<div class="t" style="left:476.0px;top:934px;font-size:13.3px;color:#8E8E8E;letter-spacing:-0.684px;">103ms</div>
<svg style="left:119px;top:953px" width="14" height="14" viewBox="0 0 14 14"><defs><radialGradient id="okg" cx="50%" cy="35%" r="60%"><stop offset="0" stop-color="#A8E8A0"/><stop offset="1" stop-color="#5CBA5C"/></radialGradient></defs><circle cx="7" cy="7" r="7" fill="url(#okg)"/><text x="7" y="9.4" text-anchor="middle" font-family="Liberation Sans" font-weight="bold" font-size="6.2" fill="#3E5E3E">OK</text></svg>
<div class="t" style="left:137px;top:952px;font-size:15.0px;color:#000;letter-spacing:0.262px;">test_clean_username_false</div>
<div class="t" style="left:482.5px;top:954px;font-size:13.3px;color:#8E8E8E;letter-spacing:-0.631px;">53ms</div>
<svg style="left:119px;top:973px" width="14" height="14" viewBox="0 0 14 14"><defs><radialGradient id="okg" cx="50%" cy="35%" r="60%"><stop offset="0" stop-color="#A8E8A0"/><stop offset="1" stop-color="#5CBA5C"/></radialGradient></defs><circle cx="7" cy="7" r="7" fill="url(#okg)"/><text x="7" y="9.4" text-anchor="middle" font-family="Liberation Sans" font-weight="bold" font-size="6.2" fill="#3E5E3E">OK</text></svg>
<div class="t" style="left:137px;top:972px;font-size:15.0px;color:#000;letter-spacing:0.206px;">test_clean_username_success</div>
<div class="t" style="left:482.5px;top:974px;font-size:13.3px;color:#8E8E8E;letter-spacing:-0.631px;">50ms</div>
<div class="t mono" style="left:528px;top:753px;font-size:12.5px;letter-spacing:-0.5px;color:#1A1A9A">reddit_pycha:python -u /opt/.pycharm_helpers/pycharm/django_test_manage.py test . /app</div>
<div class="t mono" style="left:528px;top:768px;font-size:12.5px;letter-spacing:-0.5px;color:#1A1A9A">Testing started at 22:16 ...</div>
<div class="t mono" style="left:528px;top:783px;font-size:12.5px;letter-spacing:-0.5px;color:#000">Creating test database for alias 'default'...</div>
<div class="t mono" style="left:528px;top:798px;font-size:12.5px;letter-spacing:-0.5px;color:#000">Destroying test database for alias 'default'...</div>
<div class="t mono" style="left:528px;top:828px;font-size:12.5px;letter-spacing:-0.5px;color:#1A1A9A">Process finished with exit code 0</div>
<svg style="left:1810px;top:757px" width="14" height="12" viewBox="0 0 14 12"><path d="M7 0L14 6.5H10V12H4V6.5H0Z" fill="#909090"/></svg>
<svg style="left:1810px;top:782px" width="14" height="12" viewBox="0 0 14 12"><path d="M7 12L14 5.5H10V0H4V5.5H0Z" fill="#909090"/></svg>
<svg style="left:1810px;top:805px" width="15" height="16" viewBox="0 0 15 16"><rect x="0" y="0" width="10" height="1.3" fill="#555"/><rect x="0" y="14.5" width="8" height="1.3" fill="#555"/><rect x="4" y="5" width="5" height="1.3" fill="#555"/><rect x="4" y="9.5" width="5" height="1.3" fill="#555"/><path d="M10 2H13Q14.5 2 14.5 4V5Q14.5 6.8 12.5 6.8H2" stroke="#3C8CC8" stroke-width="1.4" fill="none"/><path d="M2.5 4.5L0.5 6.8L2.5 9" stroke="#3C8CC8" stroke-width="1.4" fill="none"/><path d="M13 11.5H14.5" stroke="#3C8CC8"/><path d="M5 11.5H14" stroke="#3C8CC8" stroke-width="1.4"/><path d="M11.5 9.5L13.8 11.5L11.5 13.8" stroke="#3C8CC8" stroke-width="1.4" fill="none"/></svg>
<svg style="left:1810px;top:831px" width="15" height="15" viewBox="0 0 15 15"><rect x="0.7" y="2.7" width="13" height="11.5" fill="#DADADA" stroke="#7A7A7A" stroke-width="1.4"/><rect x="0" y="2" width="14" height="3" fill="#7A7A7A"/><path d="M8.5 0H11.5V6H14L10 10.5L6 6H8.5Z" fill="#9B59C0"/></svg>
<svg style="left:1810px;top:857px" width="15" height="14" viewBox="0 0 15 14"><rect x="3" y="0" width="9" height="3" fill="#8A8A8A"/><rect x="0" y="3" width="15" height="6" rx="1" fill="#3C8CC8"/><rect x="3" y="6" width="9" height="8" fill="#8A8A8A"/><rect x="5.5" y="8" width="4" height="1.2" fill="#fff"/><rect x="5.5" y="10.5" width="4" height="1.2" fill="#fff"/></svg>
<svg style="left:1810px;top:879px" width="15" height="16" viewBox="0 0 15 16"><path d="M0 3H15V4.5H0Z" fill="#555"/><path d="M5 1Q7.5 -0.5 10 1V3H5Z" fill="#555"/><path d="M1.5 5H13.5L12.5 16H2.5Z" fill="#3C8CC8"/><path d="M4.5 7V14M7.5 7V14M10.5 7V14" stroke="#fff" stroke-width="1"/></svg>
<svg style="left:32px;top:1017px" width="14" height="14" viewBox="0 0 14 14"><path fill="#3F7EB8" d="M3 0H7Q8 0 8 1V5Q8 6 7 6H3V7H0V3Q0 2 1 2H5V1H3Z"/><path fill="#E8B41E" d="M11 12H6Q5 12 5 11V7Q5 6 6 6H9V5H12V9Q12 10 11 10H7V11H9Z"/><path d="M7 8L10.5 10.5L7 13" stroke="#333" stroke-width="1.3" fill="none"/></svg>
<div class="t" style="left:50px;top:1016px;font-size:14px;color:#000;letter-spacing:-0.203px;">Python Console</div>
<svg style="left:172px;top:1018px" width="11" height="11" viewBox="0 0 11 11"><rect x="0.6" y="0.6" width="9.8" height="9.8" fill="#E4E4E4" stroke="#8A8A8A" stroke-width="1.2"/><rect x="1.5" y="1.5" width="8" height="8" fill="#9E9E9E"/><path d="M3 3.5L5 5.2L3 7M5.5 7.5H8" stroke="#fff" stroke-width="0.9" fill="none"/></svg>
<div class="t" style="left:188px;top:1016px;font-size:14px;color:#000;letter-spacing:-0.113px;">Terminal</div>
<svg style="left:264px;top:1016px" width="14" height="14" viewBox="0 0 14 14"><rect x="0" y="0" width="8" height="9" fill="#4A8FCC"/><circle cx="9" cy="9" r="5" fill="#E89A3C"/><path d="M4 9A5 5 0 0 1 9 4V9Z" fill="#2EAA44"/><circle cx="7.5" cy="7.5" r="3.5" fill="#2EAA44"/></svg>
<div class="t" style="left:281px;top:1016px;font-size:14px;color:#000;letter-spacing:-0.127px;"><span class="u">9</span>: Version Control</div>
<svg style="left:414px;top:1017px" width="13" height="13" viewBox="0 0 13 13"><circle cx="5.5" cy="5.5" r="4.5" fill="#CFE6F7" stroke="#7A7A7A" stroke-width="1.6"/><path d="M8.5 8.5L12.3 12.3" stroke="#7A7A7A" stroke-width="2.4"/></svg>
<div class="t" style="left:431px;top:1016px;font-size:14px;color:#000;letter-spacing:-0.685px;"><span class="u">3</span>: Find</div>
<svg style="left:489px;top:1017px" width="11" height="13" viewBox="0 0 11 13"><path d="M0 0L11 6.5L0 13Z" fill="#3EAA4A"/></svg>
<div class="t" style="left:505px;top:1016px;font-size:14px;color:#000;letter-spacing:-1.041px;"><span class="u">4</span>: Run</div>
<svg style="left:561px;top:1015px" width="16" height="16" viewBox="0 0 16 16"><path d="M2.5 1L4 3M6 0.5V3M9.5 1L8 3M2.5 15L4 13M6 15.5V13M9.5 15L8 13" stroke="#555" stroke-width="1.1"/><circle cx="6" cy="8" r="5.4" fill="#3FAE4B"/><circle cx="12.2" cy="8" r="3.6" fill="#E8E8E8"/><circle cx="12.4" cy="8" r="2.3" fill="#686868"/></svg>
<div class="t" style="left:578px;top:1016px;font-size:14px;color:#000;letter-spacing:-0.477px;"><span class="u">5</span>: Debug</div>
<svg style="left:653px;top:1016px" width="14" height="14" viewBox="0 0 14 14"><circle cx="3.5" cy="3" r="3" fill="#fff" stroke="#555" stroke-width="1"/><path d="M2 2.5H5M2 3.8H5" stroke="#555" stroke-width=".7"/><circle cx="8.5" cy="7" r="3.3" fill="#E9B77C"/><path d="M5 6Q8.5 1.5 12 6Z" fill="#555"/><rect x="5" y="10" width="7" height="4" fill="#3C8CC8"/></svg>
<div class="t" style="left:670px;top:1016px;font-size:14px;color:#000;letter-spacing:-0.928px;"><span class="u">6</span>: TODO</div>
<svg style="left:1744px;top:1017px" width="12" height="12" viewBox="0 0 12 12"><path d="M1.5 0H10.5Q12 0 12 1.5V7.5Q12 9 10.5 9H7L5.5 11.5V9H1.5Q0 9 0 7.5V1.5Q0 0 1.5 0Z" fill="#A9A9A9"/></svg>
<div class="t" style="left:1762px;top:1016px;font-size:14px;color:#000;letter-spacing:-0.227px;">Event Log</div>
<svg style="left:8px;top:1039px" width="15" height="14" viewBox="0 0 15 14"><rect x="0.7" y="0.7" width="13" height="11.5" fill="#C4C4C4" stroke="#6E6E6E" stroke-width="1.2"/><rect x="0" y="12.8" width="14.5" height="1.2" fill="#6E6E6E"/></svg>
<div class="t" style="left:31px;top:1038px;font-size:15px;color:#000;letter-spacing:-0.035px;">Tests Passed: 7 passed (a minute ago)</div>
<div class="t" style="left:1599px;top:1039px;font-size:14.5px;color:#000;letter-spacing:-0.719px;">9:1</div>
<div class="t" style="left:1629px;top:1039px;font-size:14.5px;color:#000;letter-spacing:-1.461px;">LF</div>
<svg style="left:1645px;top:1042px" width="6" height="10" viewBox="0 0 6 10"><path d="M0 4H6L3 0Z M0 6H6L3 10Z" fill="#555"/></svg>
<div class="t" style="left:1662px;top:1039px;font-size:14.5px;color:#000;letter-spacing:-0.216px;">UTF-8</div>
<svg style="left:1703px;top:1042px" width="6" height="10" viewBox="0 0 6 10"><path d="M0 4H6L3 0Z M0 6H6L3 10Z" fill="#555"/></svg>
<div class="t" style="left:1721px;top:1039px;font-size:14.5px;color:#000;letter-spacing:0.282px;">Git: master</div>
<svg style="left:1796px;top:1042px" width="6" height="10" viewBox="0 0 6 10"><path d="M0 4H6L3 0Z M0 6H6L3 10Z" fill="#555"/></svg>
<svg style="left:1811px;top:1041px" width="10" height="10" viewBox="0 0 10 10"><path d="M2 5V3Q2 0.8 4 0.8Q6 0.8 6 3" stroke="#8A8A8A" stroke-width="1.3" fill="none"/><rect x="3" y="5" width="7" height="5" fill="#8A8A8A"/><rect x="6" y="6.5" width="1.2" height="2" fill="#fff"/></svg>
<svg style="left:1834px;top:1039px" width="13" height="14" viewBox="0 0 13 14"><path d="M2 6Q2 0.5 6.5 0.5Q11 0.5 11 6Z" fill="none" stroke="#6E6E6E" stroke-width="1.2"/><rect x="1" y="5" width="11" height="1.5" fill="#6E6E6E"/><circle cx="6.5" cy="9" r="4" fill="none" stroke="#6E6E6E" stroke-width="1.2"/><path d="M4.5 8.5H5.5M7.5 8.5H8.5M4.5 11Q6.5 10 8.5 11" stroke="#6E6E6E" stroke-width="1"/><path d="M2 14H11" stroke="#6E6E6E" stroke-width="1.2"/></svg>
</body></html>
